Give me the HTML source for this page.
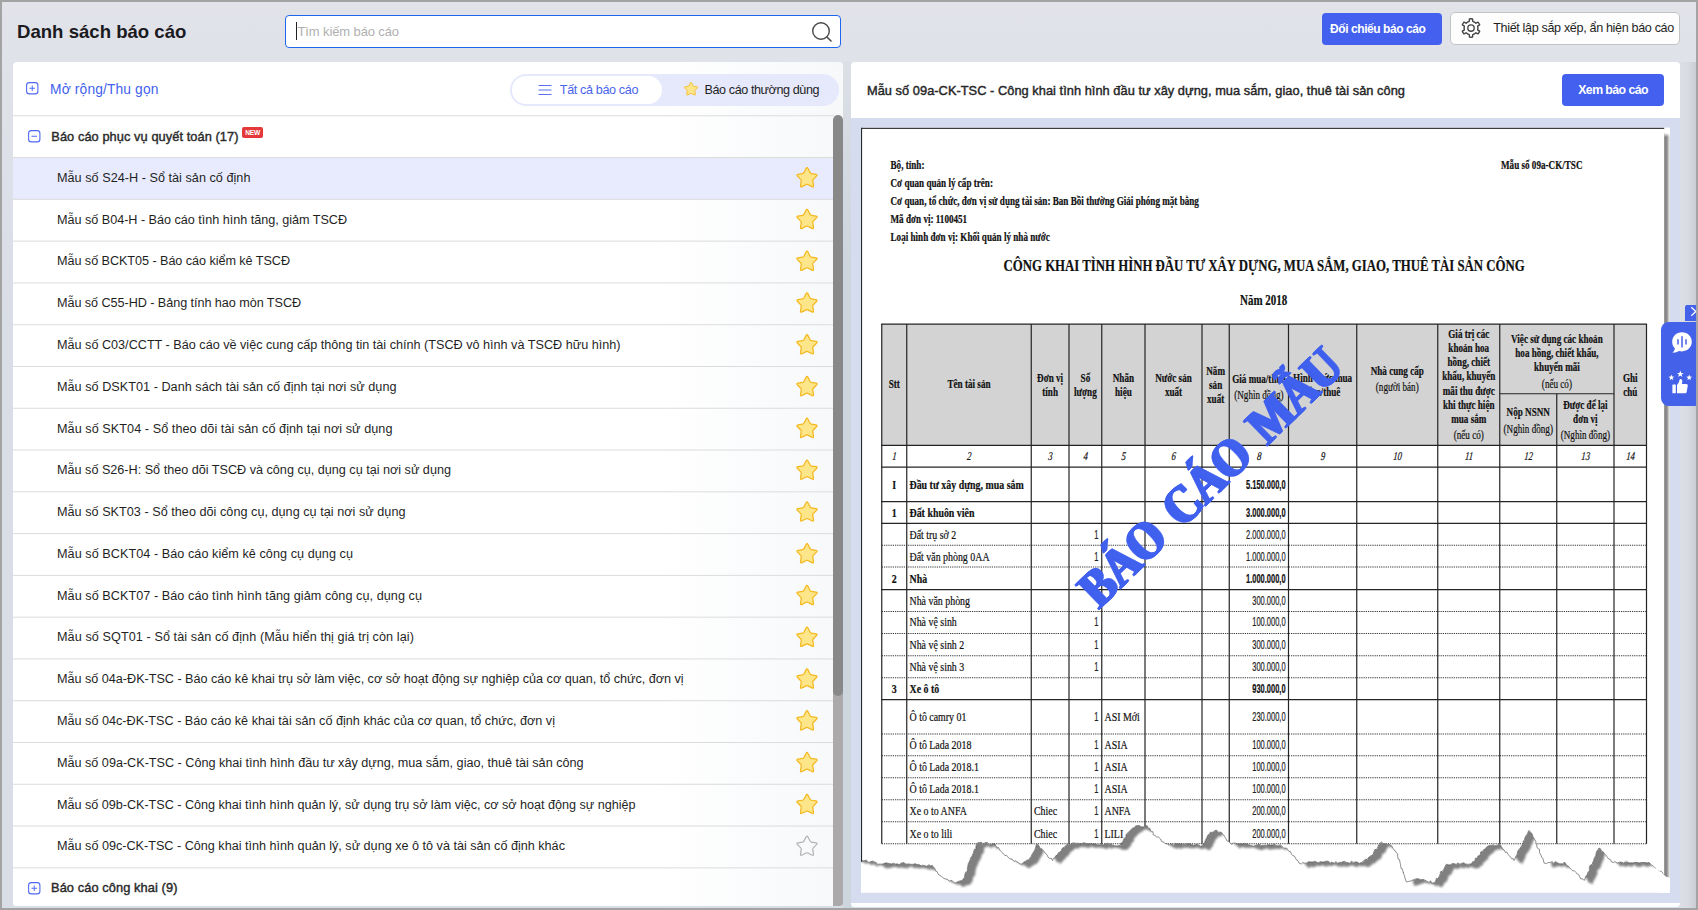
<!DOCTYPE html>
<html><head><meta charset="utf-8"><title>Danh sách báo cáo</title>
<style>
*{box-sizing:border-box;margin:0;padding:0}
html,body{width:1698px;height:910px;overflow:hidden}
body{background:#a3a3a3;font-family:"Liberation Sans",sans-serif;color:#1f1f1f;position:relative}
.abs{position:absolute}
#page{position:absolute;left:2px;top:2px;width:1694px;height:905.6px;background:linear-gradient(to bottom,#e1e3e9 0,#e0e2e9 60px,#d9dde6 320px,#d9dde6 100%);overflow:hidden}
.t{position:absolute;white-space:pre;line-height:0;font-size:0}
.t span{line-height:1;display:block}
#lp{position:absolute;left:11px;top:60px;width:830px;height:844.2px;background:linear-gradient(to right,#fff 0,#fff 78%,#f6f8fa 100%);border-radius:4px 4px 3px 3px;overflow:hidden}
#rp{position:absolute;left:849px;top:60px;width:829px;height:844.5px;background:#fff;border-radius:4px;overflow:hidden}
.row{position:absolute;left:0;width:820px}
.star{position:absolute;overflow:visible}
</style></head><body><div id="page">

<div class="t" style="left:15px;top:18.9px"><span style="font:bold 18.6px 'Liberation Sans', sans-serif;letter-spacing:-0.004px;white-space:pre;color:#1a1a1f">Danh sách báo cáo</span></div>
<div class="abs" style="left:283px;top:13px;width:556px;height:33px;background:#fff;border:1.4px solid #1d66ee;border-radius:4px"></div>
<div class="abs" style="left:294px;top:20px;width:1px;height:18px;background:#222"></div>
<div class="t" style="left:295.5px;top:21.9px"><span style="font:13px 'Liberation Sans', sans-serif;letter-spacing:-0.114px;white-space:pre;color:#b0b0b0">Tìm kiếm báo cáo</span></div>
<svg class="abs" style="left:807.5px;top:17.5px" width="24" height="24" viewBox="0 0 24 24"><circle cx="11" cy="11" r="8.3" fill="none" stroke="#484848" stroke-width="1.4"/><path d="M17.2 17.2 L21 21" stroke="#484848" stroke-width="1.6" stroke-linecap="round"/></svg>
<div class="abs" style="left:1320px;top:11px;width:120px;height:32px;background:#4361ee;border-radius:4px"></div>
<div class="t" style="left:1328px;top:19.9px"><span style="font:bold 12px 'Liberation Sans', sans-serif;letter-spacing:-0.423px;white-space:pre;color:#fff">Đối chiếu báo cáo</span></div>
<div class="abs" style="left:1448px;top:10.3px;width:230px;height:32.6px;background:#fdfdfd;border:1px solid #c2c3c7;border-radius:5px"></div>
<div class="t" style="left:1491.2px;top:18.73px"><span style="font:12.6px 'Liberation Sans', sans-serif;letter-spacing:-0.348px;white-space:pre;color:#1f1f1f">Thiết lập sắp xếp, ẩn hiện báo cáo</span></div>
<svg class="abs" style="left:1458px;top:15px" width="22" height="22" viewBox="-11 -11 22 22"><path d="M-1.72 -6.68 L-1.58 -9.06 A9.20 9.20 0 0 1 1.58 -9.06 L1.72 -6.68 A6.90 6.90 0 0 1 4.93 -4.83 L7.06 -5.90 A9.20 9.20 0 0 1 8.64 -3.16 L6.65 -1.86 A6.90 6.90 0 0 1 6.65 1.86 L8.64 3.16 A9.20 9.20 0 0 1 7.06 5.90 L4.93 4.83 A6.90 6.90 0 0 1 1.72 6.68 L1.58 9.06 A9.20 9.20 0 0 1 -1.58 9.06 L-1.72 6.68 A6.90 6.90 0 0 1 -4.93 4.83 L-7.06 5.90 A9.20 9.20 0 0 1 -8.64 3.16 L-6.65 1.86 A6.90 6.90 0 0 1 -6.65 -1.86 L-8.64 -3.16 A9.20 9.20 0 0 1 -7.06 -5.90 L-4.93 -4.83 A6.90 6.90 0 0 1 -1.72 -6.68 Z" fill="none" stroke="#444" stroke-width="1.4" stroke-linejoin="round"/><circle r="3.2" fill="none" stroke="#444" stroke-width="1.35"/></svg>
<div class="abs" style="left:840.6px;top:60px;width:8.6px;height:846px;background:linear-gradient(to bottom,#dcdfe6 0,#cdd5dd 200px,#cdd5dd 100%)"></div>
<div class="abs" style="left:1678px;top:60px;width:16px;height:846px;background:linear-gradient(to right,#dcdfe6 0,#d8dbe2 50%,#cacdd4 100%)"></div>
<div id="lp">
<svg class="abs" style="left:13px;top:20px" width="13" height="13" viewBox="0 0 13 13"><rect x="0.6" y="0.6" width="11.3" height="11.3" rx="2.7" fill="#fff" stroke="#5069f2" stroke-width="1.1"/><path d="M3.5 6.25 H9 M6.25 3.5 V9" stroke="#5069f2" stroke-width="1"/></svg>
<div class="t" style="left:37.1px;top:20.1px"><span style="font:13.8px 'Liberation Sans', sans-serif;letter-spacing:0.130px;white-space:pre;color:#4262ee">Mở rộng/Thu gọn</span></div>
<div class="abs" style="left:497px;top:12px;width:329px;height:32px;background:#e6e9fc;border-radius:16px"></div>
<div class="abs" style="left:499px;top:14px;width:150px;height:28px;background:#fff;border-radius:14px"></div>
<svg class="abs" style="left:525px;top:21.5px" width="14" height="12" viewBox="0 0 14 12"><path d="M0.5 1.5 H13.5 M0.5 6 H13.5 M0.5 10.5 H13.5" stroke="#5a70f0" stroke-width="1.1"/></svg>
<div class="t" style="left:546.8px;top:21px"><span style="font:12.6px 'Liberation Sans', sans-serif;letter-spacing:-0.358px;white-space:pre;color:#4a64ea">Tất cả báo cáo</span></div>
<svg class="star" style="left:669.5px;top:19.5px;width:16px;height:15px" viewBox="0 0 24 22" width="24" height="22"><path d="M11.04 1.07 Q12.00 -0.80 12.96 1.07 L15.06 5.18 Q15.47 5.98 16.36 6.12 L20.91 6.85 Q22.98 7.18 21.50 8.67 L18.25 11.94 Q17.61 12.57 17.75 13.46 L18.46 18.02 Q18.79 20.09 16.92 19.14 L12.80 17.06 Q12.00 16.65 11.20 17.06 L7.08 19.14 Q5.21 20.09 5.54 18.02 L6.25 13.46 Q6.39 12.57 5.75 11.94 L2.50 8.67 Q1.02 7.18 3.09 6.85 L7.64 6.12 Q8.53 5.98 8.94 5.18 Z" fill="#fde68a" stroke="#f5b81f" stroke-width="1.25" stroke-linejoin="round"/></svg>
<div class="t" style="left:691.5px;top:21px"><span style="font:12.6px 'Liberation Sans', sans-serif;letter-spacing:-0.413px;white-space:pre;color:#1f1f1f">Báo cáo thường dùng</span></div>
<div class="row" style="top:53.3px;height:41.78px"></div>
<svg class="abs" style="left:15px;top:68px" width="13" height="13" viewBox="0 0 13 13"><rect x="0.6" y="0.6" width="11.3" height="11.3" rx="2.7" fill="#fff" stroke="#5069f2" stroke-width="1.1"/><path d="M3.5 6.25 H9" stroke="#5069f2" stroke-width="1"/></svg>
<div class="t" style="left:38.3px;top:66.95px"><span style="font:12.8px 'Liberation Sans', sans-serif;-webkit-text-stroke:0.42px currentColor;letter-spacing:0.075px;white-space:pre;color:#2a2a2a">Báo cáo phục vụ quyết toán (17)</span></div>
<div class="abs" style="left:229.4px;top:65.2px;width:20.5px;height:10.6px;background:#e5383b;border-radius:2px;color:#fff;font:bold 6.6px 'Liberation Sans', sans-serif;line-height:11.8px;text-align:center;letter-spacing:-0.2px">NEW</div>
<div class="row" style="top:95.08px;height:41.78px;background:#e8ebfd;"></div>
<div class="t" style="left:44px;top:108.88px"><span style="font:12.65px 'Liberation Sans', sans-serif;letter-spacing:0.029px;white-space:pre;">Mẫu số S24-H - Sổ tài sản cố định</span></div>
<div class="row" style="top:136.86px;height:41.78px;"></div>
<div class="t" style="left:44px;top:150.66px"><span style="font:12.65px 'Liberation Sans', sans-serif;letter-spacing:-0.028px;white-space:pre;">Mẫu số B04-H - Báo cáo tình hình tăng, giảm TSCĐ</span></div>
<div class="row" style="top:178.64px;height:41.78px;"></div>
<div class="t" style="left:44px;top:192.44px"><span style="font:12.65px 'Liberation Sans', sans-serif;letter-spacing:-0.059px;white-space:pre;">Mẫu số BCKT05 - Báo cáo kiểm kê TSCĐ</span></div>
<div class="row" style="top:220.42px;height:41.78px;"></div>
<div class="t" style="left:44px;top:234.22px"><span style="font:12.65px 'Liberation Sans', sans-serif;letter-spacing:-0.062px;white-space:pre;">Mẫu số C55-HD - Bảng tính hao mòn TSCĐ</span></div>
<div class="row" style="top:262.2px;height:41.78px;"></div>
<div class="t" style="left:44px;top:276px"><span style="font:12.65px 'Liberation Sans', sans-serif;letter-spacing:-0.003px;white-space:pre;">Mẫu số C03/CCTT - Báo cáo về việc cung cấp thông tin tài chính (TSCĐ vô hình và TSCĐ hữu hình)</span></div>
<div class="row" style="top:303.98px;height:41.78px;"></div>
<div class="t" style="left:44px;top:317.78px"><span style="font:12.65px 'Liberation Sans', sans-serif;letter-spacing:0.029px;white-space:pre;">Mẫu số DSKT01 - Danh sách tài sản cố định tại nơi sử dụng</span></div>
<div class="row" style="top:345.76px;height:41.78px;"></div>
<div class="t" style="left:44px;top:359.56px"><span style="font:12.65px 'Liberation Sans', sans-serif;letter-spacing:0.056px;white-space:pre;">Mẫu số SKT04 - Sổ theo dõi tài sản cố định tại nơi sử dụng</span></div>
<div class="row" style="top:387.54px;height:41.78px;"></div>
<div class="t" style="left:44px;top:401.34px"><span style="font:12.65px 'Liberation Sans', sans-serif;letter-spacing:-0.009px;white-space:pre;">Mẫu số S26-H: Sổ theo dõi TSCĐ và công cụ, dụng cụ tại nơi sử dụng</span></div>
<div class="row" style="top:429.32px;height:41.78px;"></div>
<div class="t" style="left:44px;top:443.12px"><span style="font:12.65px 'Liberation Sans', sans-serif;letter-spacing:0.025px;white-space:pre;">Mẫu số SKT03 - Sổ theo dõi công cụ, dụng cụ tại nơi sử dụng</span></div>
<div class="row" style="top:471.1px;height:41.78px;"></div>
<div class="t" style="left:44px;top:484.9px"><span style="font:12.65px 'Liberation Sans', sans-serif;letter-spacing:0.049px;white-space:pre;">Mẫu số BCKT04 - Báo cáo kiểm kê công cụ dụng cụ</span></div>
<div class="row" style="top:512.88px;height:41.78px;"></div>
<div class="t" style="left:44px;top:526.68px"><span style="font:12.65px 'Liberation Sans', sans-serif;letter-spacing:0.052px;white-space:pre;">Mẫu số BCKT07 - Báo cáo tình hình tăng giảm công cụ, dụng cụ</span></div>
<div class="row" style="top:554.66px;height:41.78px;"></div>
<div class="t" style="left:44px;top:568.46px"><span style="font:12.65px 'Liberation Sans', sans-serif;letter-spacing:0.078px;white-space:pre;">Mẫu số SQT01 - Sổ tài sản cố định (Mẫu hiển thị giá trị còn lại)</span></div>
<div class="row" style="top:596.44px;height:41.78px;"></div>
<div class="t" style="left:44px;top:610.24px"><span style="font:12.65px 'Liberation Sans', sans-serif;letter-spacing:-0.022px;white-space:pre;">Mẫu số 04a-ĐK-TSC - Báo cáo kê khai trụ sở làm việc, cơ sở hoạt động sự nghiệp của cơ quan, tổ chức, đơn vị</span></div>
<div class="row" style="top:638.22px;height:41.78px;"></div>
<div class="t" style="left:44px;top:652.02px"><span style="font:12.65px 'Liberation Sans', sans-serif;letter-spacing:0.001px;white-space:pre;">Mẫu số 04c-ĐK-TSC - Báo cáo kê khai tài sản cố định khác của cơ quan, tổ chức, đơn vị</span></div>
<div class="row" style="top:680px;height:41.78px;"></div>
<div class="t" style="left:44px;top:693.8px"><span style="font:12.65px 'Liberation Sans', sans-serif;letter-spacing:-0.014px;white-space:pre;">Mẫu số 09a-CK-TSC - Công khai tình hình đầu tư xây dựng, mua sắm, giao, thuê tài sản công</span></div>
<div class="row" style="top:721.78px;height:41.78px;"></div>
<div class="t" style="left:44px;top:735.58px"><span style="font:12.65px 'Liberation Sans', sans-serif;letter-spacing:-0.030px;white-space:pre;">Mẫu số 09b-CK-TSC - Công khai tình hình quản lý, sử dụng trụ sở làm việc, cơ sở hoạt động sự nghiệp</span></div>
<div class="row" style="top:763.56px;height:41.78px;"></div>
<div class="t" style="left:44px;top:777.36px"><span style="font:12.65px 'Liberation Sans', sans-serif;letter-spacing:-0.009px;white-space:pre;">Mẫu số 09c-CK-TSC - Công khai tình hình quản lý, sử dụng xe ô tô và tài sản cố định khác</span></div>
<div class="row" style="top:805.34px;height:41.78px"></div>
<svg class="abs" style="left:15px;top:819.94px" width="13" height="13" viewBox="0 0 13 13"><rect x="0.6" y="0.6" width="11.3" height="11.3" rx="2.7" fill="#fff" stroke="#5069f2" stroke-width="1.1"/><path d="M3.5 6.25 H9 M6.25 3.5 V9" stroke="#5069f2" stroke-width="1"/></svg>
<div class="t" style="left:38px;top:818.29px"><span style="font:12.8px 'Liberation Sans', sans-serif;-webkit-text-stroke:0.42px currentColor;letter-spacing:0.095px;white-space:pre;color:#2a2a2a">Báo cáo công khai (9)</span></div>
<svg class="abs" style="left:0;top:0" width="830" height="845"><rect x="0" y="53.30" width="821" height="1" fill="#dcdcdc"/><rect x="0" y="95.08" width="821" height="1" fill="#dcdcdc"/><rect x="0" y="136.86" width="821" height="1" fill="#dcdcdc"/><rect x="0" y="178.64" width="821" height="1" fill="#dcdcdc"/><rect x="0" y="220.42" width="821" height="1" fill="#dcdcdc"/><rect x="0" y="262.20" width="821" height="1" fill="#dcdcdc"/><rect x="0" y="303.98" width="821" height="1" fill="#dcdcdc"/><rect x="0" y="345.76" width="821" height="1" fill="#dcdcdc"/><rect x="0" y="387.54" width="821" height="1" fill="#dcdcdc"/><rect x="0" y="429.32" width="821" height="1" fill="#dcdcdc"/><rect x="0" y="471.10" width="821" height="1" fill="#dcdcdc"/><rect x="0" y="512.88" width="821" height="1" fill="#dcdcdc"/><rect x="0" y="554.66" width="821" height="1" fill="#dcdcdc"/><rect x="0" y="596.44" width="821" height="1" fill="#dcdcdc"/><rect x="0" y="638.22" width="821" height="1" fill="#dcdcdc"/><rect x="0" y="680.00" width="821" height="1" fill="#dcdcdc"/><rect x="0" y="721.78" width="821" height="1" fill="#dcdcdc"/><rect x="0" y="763.56" width="821" height="1" fill="#dcdcdc"/><rect x="0" y="805.34" width="821" height="1" fill="#dcdcdc"/><path transform="translate(782.00,105.43)" d="M11.04 1.07 Q12.00 -0.80 12.96 1.07 L15.06 5.18 Q15.47 5.98 16.36 6.12 L20.91 6.85 Q22.98 7.18 21.50 8.67 L18.25 11.94 Q17.61 12.57 17.75 13.46 L18.46 18.02 Q18.79 20.09 16.92 19.14 L12.80 17.06 Q12.00 16.65 11.20 17.06 L7.08 19.14 Q5.21 20.09 5.54 18.02 L6.25 13.46 Q6.39 12.57 5.75 11.94 L2.50 8.67 Q1.02 7.18 3.09 6.85 L7.64 6.12 Q8.53 5.98 8.94 5.18 Z" fill="#fde68a" stroke="#f5b81f" stroke-width="1.25" stroke-linejoin="round"/><path transform="translate(782.00,147.21)" d="M11.04 1.07 Q12.00 -0.80 12.96 1.07 L15.06 5.18 Q15.47 5.98 16.36 6.12 L20.91 6.85 Q22.98 7.18 21.50 8.67 L18.25 11.94 Q17.61 12.57 17.75 13.46 L18.46 18.02 Q18.79 20.09 16.92 19.14 L12.80 17.06 Q12.00 16.65 11.20 17.06 L7.08 19.14 Q5.21 20.09 5.54 18.02 L6.25 13.46 Q6.39 12.57 5.75 11.94 L2.50 8.67 Q1.02 7.18 3.09 6.85 L7.64 6.12 Q8.53 5.98 8.94 5.18 Z" fill="#fde68a" stroke="#f5b81f" stroke-width="1.25" stroke-linejoin="round"/><path transform="translate(782.00,188.99)" d="M11.04 1.07 Q12.00 -0.80 12.96 1.07 L15.06 5.18 Q15.47 5.98 16.36 6.12 L20.91 6.85 Q22.98 7.18 21.50 8.67 L18.25 11.94 Q17.61 12.57 17.75 13.46 L18.46 18.02 Q18.79 20.09 16.92 19.14 L12.80 17.06 Q12.00 16.65 11.20 17.06 L7.08 19.14 Q5.21 20.09 5.54 18.02 L6.25 13.46 Q6.39 12.57 5.75 11.94 L2.50 8.67 Q1.02 7.18 3.09 6.85 L7.64 6.12 Q8.53 5.98 8.94 5.18 Z" fill="#fde68a" stroke="#f5b81f" stroke-width="1.25" stroke-linejoin="round"/><path transform="translate(782.00,230.77)" d="M11.04 1.07 Q12.00 -0.80 12.96 1.07 L15.06 5.18 Q15.47 5.98 16.36 6.12 L20.91 6.85 Q22.98 7.18 21.50 8.67 L18.25 11.94 Q17.61 12.57 17.75 13.46 L18.46 18.02 Q18.79 20.09 16.92 19.14 L12.80 17.06 Q12.00 16.65 11.20 17.06 L7.08 19.14 Q5.21 20.09 5.54 18.02 L6.25 13.46 Q6.39 12.57 5.75 11.94 L2.50 8.67 Q1.02 7.18 3.09 6.85 L7.64 6.12 Q8.53 5.98 8.94 5.18 Z" fill="#fde68a" stroke="#f5b81f" stroke-width="1.25" stroke-linejoin="round"/><path transform="translate(782.00,272.55)" d="M11.04 1.07 Q12.00 -0.80 12.96 1.07 L15.06 5.18 Q15.47 5.98 16.36 6.12 L20.91 6.85 Q22.98 7.18 21.50 8.67 L18.25 11.94 Q17.61 12.57 17.75 13.46 L18.46 18.02 Q18.79 20.09 16.92 19.14 L12.80 17.06 Q12.00 16.65 11.20 17.06 L7.08 19.14 Q5.21 20.09 5.54 18.02 L6.25 13.46 Q6.39 12.57 5.75 11.94 L2.50 8.67 Q1.02 7.18 3.09 6.85 L7.64 6.12 Q8.53 5.98 8.94 5.18 Z" fill="#fde68a" stroke="#f5b81f" stroke-width="1.25" stroke-linejoin="round"/><path transform="translate(782.00,314.33)" d="M11.04 1.07 Q12.00 -0.80 12.96 1.07 L15.06 5.18 Q15.47 5.98 16.36 6.12 L20.91 6.85 Q22.98 7.18 21.50 8.67 L18.25 11.94 Q17.61 12.57 17.75 13.46 L18.46 18.02 Q18.79 20.09 16.92 19.14 L12.80 17.06 Q12.00 16.65 11.20 17.06 L7.08 19.14 Q5.21 20.09 5.54 18.02 L6.25 13.46 Q6.39 12.57 5.75 11.94 L2.50 8.67 Q1.02 7.18 3.09 6.85 L7.64 6.12 Q8.53 5.98 8.94 5.18 Z" fill="#fde68a" stroke="#f5b81f" stroke-width="1.25" stroke-linejoin="round"/><path transform="translate(782.00,356.11)" d="M11.04 1.07 Q12.00 -0.80 12.96 1.07 L15.06 5.18 Q15.47 5.98 16.36 6.12 L20.91 6.85 Q22.98 7.18 21.50 8.67 L18.25 11.94 Q17.61 12.57 17.75 13.46 L18.46 18.02 Q18.79 20.09 16.92 19.14 L12.80 17.06 Q12.00 16.65 11.20 17.06 L7.08 19.14 Q5.21 20.09 5.54 18.02 L6.25 13.46 Q6.39 12.57 5.75 11.94 L2.50 8.67 Q1.02 7.18 3.09 6.85 L7.64 6.12 Q8.53 5.98 8.94 5.18 Z" fill="#fde68a" stroke="#f5b81f" stroke-width="1.25" stroke-linejoin="round"/><path transform="translate(782.00,397.89)" d="M11.04 1.07 Q12.00 -0.80 12.96 1.07 L15.06 5.18 Q15.47 5.98 16.36 6.12 L20.91 6.85 Q22.98 7.18 21.50 8.67 L18.25 11.94 Q17.61 12.57 17.75 13.46 L18.46 18.02 Q18.79 20.09 16.92 19.14 L12.80 17.06 Q12.00 16.65 11.20 17.06 L7.08 19.14 Q5.21 20.09 5.54 18.02 L6.25 13.46 Q6.39 12.57 5.75 11.94 L2.50 8.67 Q1.02 7.18 3.09 6.85 L7.64 6.12 Q8.53 5.98 8.94 5.18 Z" fill="#fde68a" stroke="#f5b81f" stroke-width="1.25" stroke-linejoin="round"/><path transform="translate(782.00,439.67)" d="M11.04 1.07 Q12.00 -0.80 12.96 1.07 L15.06 5.18 Q15.47 5.98 16.36 6.12 L20.91 6.85 Q22.98 7.18 21.50 8.67 L18.25 11.94 Q17.61 12.57 17.75 13.46 L18.46 18.02 Q18.79 20.09 16.92 19.14 L12.80 17.06 Q12.00 16.65 11.20 17.06 L7.08 19.14 Q5.21 20.09 5.54 18.02 L6.25 13.46 Q6.39 12.57 5.75 11.94 L2.50 8.67 Q1.02 7.18 3.09 6.85 L7.64 6.12 Q8.53 5.98 8.94 5.18 Z" fill="#fde68a" stroke="#f5b81f" stroke-width="1.25" stroke-linejoin="round"/><path transform="translate(782.00,481.45)" d="M11.04 1.07 Q12.00 -0.80 12.96 1.07 L15.06 5.18 Q15.47 5.98 16.36 6.12 L20.91 6.85 Q22.98 7.18 21.50 8.67 L18.25 11.94 Q17.61 12.57 17.75 13.46 L18.46 18.02 Q18.79 20.09 16.92 19.14 L12.80 17.06 Q12.00 16.65 11.20 17.06 L7.08 19.14 Q5.21 20.09 5.54 18.02 L6.25 13.46 Q6.39 12.57 5.75 11.94 L2.50 8.67 Q1.02 7.18 3.09 6.85 L7.64 6.12 Q8.53 5.98 8.94 5.18 Z" fill="#fde68a" stroke="#f5b81f" stroke-width="1.25" stroke-linejoin="round"/><path transform="translate(782.00,523.23)" d="M11.04 1.07 Q12.00 -0.80 12.96 1.07 L15.06 5.18 Q15.47 5.98 16.36 6.12 L20.91 6.85 Q22.98 7.18 21.50 8.67 L18.25 11.94 Q17.61 12.57 17.75 13.46 L18.46 18.02 Q18.79 20.09 16.92 19.14 L12.80 17.06 Q12.00 16.65 11.20 17.06 L7.08 19.14 Q5.21 20.09 5.54 18.02 L6.25 13.46 Q6.39 12.57 5.75 11.94 L2.50 8.67 Q1.02 7.18 3.09 6.85 L7.64 6.12 Q8.53 5.98 8.94 5.18 Z" fill="#fde68a" stroke="#f5b81f" stroke-width="1.25" stroke-linejoin="round"/><path transform="translate(782.00,565.01)" d="M11.04 1.07 Q12.00 -0.80 12.96 1.07 L15.06 5.18 Q15.47 5.98 16.36 6.12 L20.91 6.85 Q22.98 7.18 21.50 8.67 L18.25 11.94 Q17.61 12.57 17.75 13.46 L18.46 18.02 Q18.79 20.09 16.92 19.14 L12.80 17.06 Q12.00 16.65 11.20 17.06 L7.08 19.14 Q5.21 20.09 5.54 18.02 L6.25 13.46 Q6.39 12.57 5.75 11.94 L2.50 8.67 Q1.02 7.18 3.09 6.85 L7.64 6.12 Q8.53 5.98 8.94 5.18 Z" fill="#fde68a" stroke="#f5b81f" stroke-width="1.25" stroke-linejoin="round"/><path transform="translate(782.00,606.79)" d="M11.04 1.07 Q12.00 -0.80 12.96 1.07 L15.06 5.18 Q15.47 5.98 16.36 6.12 L20.91 6.85 Q22.98 7.18 21.50 8.67 L18.25 11.94 Q17.61 12.57 17.75 13.46 L18.46 18.02 Q18.79 20.09 16.92 19.14 L12.80 17.06 Q12.00 16.65 11.20 17.06 L7.08 19.14 Q5.21 20.09 5.54 18.02 L6.25 13.46 Q6.39 12.57 5.75 11.94 L2.50 8.67 Q1.02 7.18 3.09 6.85 L7.64 6.12 Q8.53 5.98 8.94 5.18 Z" fill="#fde68a" stroke="#f5b81f" stroke-width="1.25" stroke-linejoin="round"/><path transform="translate(782.00,648.57)" d="M11.04 1.07 Q12.00 -0.80 12.96 1.07 L15.06 5.18 Q15.47 5.98 16.36 6.12 L20.91 6.85 Q22.98 7.18 21.50 8.67 L18.25 11.94 Q17.61 12.57 17.75 13.46 L18.46 18.02 Q18.79 20.09 16.92 19.14 L12.80 17.06 Q12.00 16.65 11.20 17.06 L7.08 19.14 Q5.21 20.09 5.54 18.02 L6.25 13.46 Q6.39 12.57 5.75 11.94 L2.50 8.67 Q1.02 7.18 3.09 6.85 L7.64 6.12 Q8.53 5.98 8.94 5.18 Z" fill="#fde68a" stroke="#f5b81f" stroke-width="1.25" stroke-linejoin="round"/><path transform="translate(782.00,690.35)" d="M11.04 1.07 Q12.00 -0.80 12.96 1.07 L15.06 5.18 Q15.47 5.98 16.36 6.12 L20.91 6.85 Q22.98 7.18 21.50 8.67 L18.25 11.94 Q17.61 12.57 17.75 13.46 L18.46 18.02 Q18.79 20.09 16.92 19.14 L12.80 17.06 Q12.00 16.65 11.20 17.06 L7.08 19.14 Q5.21 20.09 5.54 18.02 L6.25 13.46 Q6.39 12.57 5.75 11.94 L2.50 8.67 Q1.02 7.18 3.09 6.85 L7.64 6.12 Q8.53 5.98 8.94 5.18 Z" fill="#fde68a" stroke="#f5b81f" stroke-width="1.25" stroke-linejoin="round"/><path transform="translate(782.00,732.13)" d="M11.04 1.07 Q12.00 -0.80 12.96 1.07 L15.06 5.18 Q15.47 5.98 16.36 6.12 L20.91 6.85 Q22.98 7.18 21.50 8.67 L18.25 11.94 Q17.61 12.57 17.75 13.46 L18.46 18.02 Q18.79 20.09 16.92 19.14 L12.80 17.06 Q12.00 16.65 11.20 17.06 L7.08 19.14 Q5.21 20.09 5.54 18.02 L6.25 13.46 Q6.39 12.57 5.75 11.94 L2.50 8.67 Q1.02 7.18 3.09 6.85 L7.64 6.12 Q8.53 5.98 8.94 5.18 Z" fill="#fde68a" stroke="#f5b81f" stroke-width="1.25" stroke-linejoin="round"/><path transform="translate(782.00,773.91)" d="M11.04 1.07 Q12.00 -0.80 12.96 1.07 L15.06 5.18 Q15.47 5.98 16.36 6.12 L20.91 6.85 Q22.98 7.18 21.50 8.67 L18.25 11.94 Q17.61 12.57 17.75 13.46 L18.46 18.02 Q18.79 20.09 16.92 19.14 L12.80 17.06 Q12.00 16.65 11.20 17.06 L7.08 19.14 Q5.21 20.09 5.54 18.02 L6.25 13.46 Q6.39 12.57 5.75 11.94 L2.50 8.67 Q1.02 7.18 3.09 6.85 L7.64 6.12 Q8.53 5.98 8.94 5.18 Z" fill="none" stroke="#b4b4b4" stroke-width="1.25" stroke-linejoin="round"/></svg>
<div class="abs" style="left:820.2px;top:626px;width:9.5px;height:219px;background:#aba9a9"></div>
<div class="abs" style="left:820.2px;top:53.4px;width:9.5px;height:580.6px;background:#888;border-radius:5px"></div>
</div>
<div id="rp">
<div class="t" style="left:16px;top:21.05px"><span style="font:12.8px 'Liberation Sans', sans-serif;-webkit-text-stroke:0.42px currentColor;letter-spacing:0.042px;white-space:pre;color:#262626">Mẫu số 09a-CK-TSC - Công khai tình hình đầu tư xây dựng, mua sắm, giao, thuê tài sản công</span></div>
<div class="abs" style="left:711px;top:12px;width:102px;height:32px;background:#4361ee;border-radius:4px"></div>
<div class="t" style="left:727.2px;top:21.1px"><span style="font:bold 12.3px 'Liberation Sans', sans-serif;letter-spacing:-0.551px;white-space:pre;color:#fff">Xem báo cáo</span></div>
<div id="pv" class="abs" style="left:0;top:56px;width:830px;height:784.6px;background:#d5dcf0">
<svg class="abs" style="left:0;top:0" width="830" height="785" viewBox="851 118 830 785">
<defs>
<linearGradient id="rsh" x1="0" x2="1" y1="0" y2="0"><stop offset="0" stop-color="#7d7d7d"/><stop offset="0.45" stop-color="#8c8c8c"/><stop offset="1" stop-color="#f4f4f4"/></linearGradient>
<linearGradient id="rsht" x1="0" x2="0" y1="0" y2="1"><stop offset="0" stop-color="#fff" stop-opacity="1"/><stop offset="1" stop-color="#fff" stop-opacity="0"/></linearGradient>
<filter id="tsh" x="-5%" y="-5%" width="110%" height="130%"><feGaussianBlur in="SourceAlpha" stdDeviation="0.9"/><feOffset dx="8.3" dy="4.2"/><feComponentTransfer><feFuncA type="linear" slope="0.5"/></feComponentTransfer><feMerge><feMergeNode/><feMergeNode in="SourceGraphic"/></feMerge></filter>
<clipPath id="tearclip"><polygon points="800,100 850.0,858.0 851.7,857.4 853.9,857.6 855.7,858.6 856.9,859.3 858.8,859.4 860.7,858.9 863.0,861.0 865.0,860.5 866.4,860.2 868.9,862.5 870.7,861.6 873.1,861.1 874.8,862.2 875.8,862.2 877.9,864.4 880.0,864.0 881.5,864.2 884.0,863.6 885.8,862.8 887.1,863.1 889.8,863.6 891.3,864.0 893.4,863.2 895.8,864.2 897.0,863.8 899.3,864.6 901.4,863.0 903.7,862.6 905.0,863.5 906.9,864.3 908.5,863.8 910.3,864.3 913.2,864.3 915.3,863.7 917.0,864.6 918.8,864.4 921.1,865.8 922.6,865.2 924.1,865.4 926.8,866.3 929.0,864.7 930.4,865.8 932.5,865.5 933.2,867.1 934.6,867.9 935.7,871.2 937.0,871.5 938.6,874.8 940.0,875.5 941.4,876.3 943.8,878.3 946.0,879.2 947.2,879.0 949.2,881.1 951.8,880.3 952.7,881.4 955.0,883.0 956.5,882.3 958.9,881.2 960.0,880.9 962.5,880.5 963.1,878.9 964.5,877.4 964.7,875.4 965.6,872.2 966.6,872.3 967.3,870.5 967.4,867.7 967.7,866.6 968.4,863.3 969.3,861.8 970.2,859.7 970.4,858.2 971.3,856.9 971.9,856.4 973.4,852.8 973.6,851.5 974.5,849.2 975.8,849.6 976.0,846.5 976.3,843.8 977.5,843.0 979.2,842.5 981.8,842.4 982.7,844.5 985.3,842.6 987.3,842.4 989.2,844.9 991.6,844.3 992.8,843.6 995.0,844.0 995.8,846.1 997.5,847.6 998.5,847.6 1000.4,851.0 1001.7,852.0 1002.9,853.2 1003.4,854.1 1005.0,855.5 1006.5,855.3 1007.7,856.8 1009.7,858.8 1012.2,859.1 1013.9,861.4 1015.6,860.8 1016.3,861.4 1018.0,862.3 1020.0,864.0 1021.8,864.0 1023.8,861.9 1025.2,861.7 1026.1,860.4 1028.8,859.7 1030.0,858.0 1031.3,856.2 1031.5,855.2 1032.6,853.5 1034.3,850.7 1034.6,850.4 1035.9,846.7 1036.1,844.9 1037.5,844.0 1039.3,846.3 1039.6,847.8 1041.9,848.9 1042.3,850.1 1043.3,850.3 1045.0,853.0 1047.1,854.9 1048.0,857.1 1049.4,858.4 1051.4,858.3 1052.5,860.5 1053.4,858.4 1054.7,857.6 1055.9,855.6 1057.0,855.3 1058.6,852.6 1060.1,852.1 1061.2,850.6 1062.5,848.0 1064.5,847.1 1066.5,844.8 1068.4,844.2 1069.9,844.7 1072.5,843.0 1074.0,843.0 1076.6,843.3 1078.0,843.2 1080.2,843.9 1081.6,843.4 1083.7,842.8 1086.2,843.4 1087.9,844.1 1090.2,843.4 1091.8,843.6 1093.5,844.1 1095.4,843.8 1097.3,844.9 1099.5,844.8 1101.7,843.3 1103.2,845.0 1105.0,844.0 1107.6,843.3 1108.8,844.3 1110.9,844.0 1113.0,845.3 1116.1,846.1 1117.4,845.8 1120.0,845.5 1121.3,842.8 1122.6,843.1 1122.9,841.3 1124.2,838.3 1126.0,837.4 1126.0,834.6 1127.5,833.0 1129.2,831.3 1130.5,830.0 1132.8,828.0 1134.2,827.9 1135.2,826.3 1137.5,825.5 1139.7,825.6 1141.0,826.9 1143.9,827.0 1145.0,825.3 1147.5,826.0 1148.2,828.3 1149.7,828.2 1151.2,831.8 1152.9,831.7 1153.3,835.0 1155.0,835.5 1156.9,837.2 1158.1,836.8 1160.6,839.0 1161.6,841.5 1164.1,842.3 1165.2,843.7 1167.5,844.0 1168.9,845.0 1171.3,843.8 1173.4,845.3 1175.0,843.4 1177.3,843.8 1178.7,843.7 1180.5,843.8 1182.8,844.2 1185.3,844.2 1186.9,844.0 1188.7,843.7 1190.5,843.8 1193.1,845.2 1194.3,845.1 1197.2,844.3 1199.0,845.2 1200.5,846.3 1202.5,845.5 1203.4,843.5 1204.7,842.7 1205.3,840.3 1206.8,837.8 1207.5,835.5 1209.3,833.9 1210.7,832.1 1212.6,832.4 1215.0,830.5 1216.7,830.2 1218.5,832.4 1221.0,832.0 1222.7,834.0 1223.3,834.5 1224.6,836.6 1225.7,838.2 1227.1,841.0 1229.3,841.5 1230.0,843.0 1231.6,844.4 1233.6,843.0 1235.1,843.3 1237.7,843.8 1239.2,844.0 1240.9,843.6 1242.9,844.1 1244.8,843.3 1247.1,844.1 1249.3,845.0 1251.5,845.5 1253.3,846.3 1255.0,845.5 1256.8,844.9 1259.4,844.3 1261.0,845.4 1262.0,845.7 1265.0,845.1 1266.7,845.4 1267.8,844.5 1270.2,845.1 1272.5,845.0 1274.0,844.0 1276.2,845.6 1278.4,845.8 1279.9,844.8 1281.9,846.3 1283.9,848.2 1286.5,848.0 1287.8,849.8 1289.2,851.5 1290.2,851.3 1291.9,854.6 1292.8,855.6 1294.2,855.9 1295.5,857.9 1296.0,859.4 1298.0,860.8 1299.0,863.0 1301.2,864.1 1302.8,862.6 1304.7,863.2 1307.0,863.0 1308.8,861.6 1310.1,861.9 1312.8,862.0 1314.5,861.2 1315.8,861.7 1318.4,862.7 1320.4,861.6 1322.1,862.0 1324.0,862.0 1325.9,861.1 1328.4,861.3 1330.5,863.2 1331.3,862.0 1334.3,863.3 1335.8,861.6 1337.5,863.3 1339.4,862.4 1341.3,862.3 1344.3,861.3 1346.1,862.3 1348.2,862.8 1349.3,863.3 1351.6,861.2 1353.0,862.4 1355.5,861.9 1357.1,862.1 1359.3,863.3 1361.5,862.5 1362.5,862.0 1365.3,859.2 1367.0,859.5 1368.7,857.3 1369.7,856.4 1371.5,855.5 1373.4,854.0 1373.8,851.9 1375.0,849.3 1376.0,849.6 1377.5,848.2 1378.7,844.8 1380.3,842.9 1381.5,842.0 1383.2,843.6 1385.7,843.8 1387.3,844.5 1389.0,844.0 1390.8,845.6 1391.8,845.9 1393.0,848.4 1394.3,850.4 1395.0,850.4 1396.5,853.0 1397.7,853.9 1397.7,856.2 1398.1,859.0 1399.6,859.7 1399.8,861.6 1400.3,863.6 1400.5,864.8 1401.1,868.5 1402.1,868.6 1403.3,872.4 1403.3,872.0 1403.6,873.7 1404.4,875.5 1404.9,877.8 1406.0,881.2 1406.5,882.0 1408.9,881.3 1410.6,881.1 1412.6,880.1 1414.3,879.4 1417.5,878.6 1419.0,879.0 1420.9,879.8 1423.2,879.3 1424.3,879.9 1426.4,880.9 1428.9,882.4 1430.7,880.8 1431.5,883.0 1434.0,883.0 1435.6,881.2 1436.4,878.3 1437.3,878.9 1439.0,877.0 1440.3,873.7 1440.3,871.8 1442.0,871.4 1443.6,869.7 1444.4,868.1 1445.3,865.9 1446.5,864.0 1447.8,864.7 1450.0,865.0 1452.5,863.5 1453.7,863.4 1456.3,864.5 1457.6,862.9 1460.0,864.2 1461.7,863.3 1463.9,862.8 1465.5,863.9 1468.2,864.4 1470.1,863.9 1471.5,864.0 1472.5,861.8 1474.8,861.4 1475.4,858.2 1477.0,858.3 1478.2,855.7 1479.9,855.8 1480.7,852.0 1482.2,851.4 1484.0,849.3 1485.5,849.1 1486.5,847.0 1488.6,845.8 1491.3,845.5 1493.2,844.8 1494.5,845.7 1496.7,845.6 1499.0,844.0 1500.4,844.7 1501.4,846.8 1503.3,849.6 1504.0,849.7 1505.5,852.7 1506.7,851.9 1508.0,854.2 1510.4,857.0 1511.6,858.7 1513.2,858.6 1514.0,860.5 1514.5,859.8 1516.1,855.8 1516.9,854.9 1517.4,853.0 1518.0,850.4 1519.0,849.5 1520.7,847.2 1521.6,845.7 1521.8,845.4 1523.2,842.7 1523.1,841.0 1524.4,840.4 1525.1,837.2 1526.8,834.6 1527.1,834.8 1528.5,831.1 1529.0,830.5 1529.7,831.3 1532.0,833.6 1533.1,837.1 1534.0,838.0 1534.5,839.2 1536.0,841.9 1535.8,843.9 1536.6,844.6 1537.0,847.6 1538.8,849.0 1539.6,849.3 1539.4,852.2 1541.0,855.2 1541.0,855.2 1541.8,857.6 1543.1,858.6 1543.7,861.8 1544.0,863.0 1546.4,863.6 1548.1,862.5 1549.8,862.5 1552.4,861.7 1553.6,863.4 1555.7,861.6 1557.4,862.8 1559.8,863.8 1562.5,863.8 1564.0,862.5 1565.1,862.7 1566.4,865.1 1568.5,866.2 1569.4,867.4 1571.3,869.4 1572.9,871.1 1574.2,870.6 1575.9,872.3 1576.9,873.8 1578.6,874.6 1579.4,876.0 1580.7,878.9 1582.7,878.8 1584.0,880.5 1584.7,879.9 1585.7,876.2 1586.9,875.5 1587.9,872.3 1588.1,872.3 1589.4,870.7 1589.3,867.3 1590.2,865.3 1592.1,864.5 1592.9,862.1 1593.6,860.5 1593.7,859.5 1595.4,856.0 1595.8,855.5 1596.1,853.1 1596.9,850.9 1597.9,850.1 1599.0,848.0 1600.6,848.8 1601.2,850.7 1603.4,851.9 1604.3,853.5 1606.3,855.9 1606.8,856.3 1608.6,859.0 1610.3,859.4 1611.5,862.0 1613.1,862.5 1615.3,861.5 1617.2,863.1 1619.2,862.2 1621.2,861.8 1623.8,863.2 1625.1,861.2 1627.6,861.3 1628.6,863.0 1631.1,862.8 1633.1,863.0 1635.1,861.2 1636.6,862.1 1639.3,863.0 1640.6,862.3 1642.9,862.0 1644.6,861.5 1647.1,863.1 1649.0,862.0 1650.0,863.2 1652.3,865.7 1653.0,864.8 1655.4,868.2 1656.3,867.1 1658.3,869.2 1659.7,871.1 1661.1,871.2 1662.5,872.6 1663.5,875.4 1665.5,875.0 1666.5,877.0 1668.1,877.0 1670.4,877.2 1671.9,877.1 1674.6,879.0 1675.7,878.4 1678.6,877.3 1680.6,877.8 1682.3,879.1 1684.3,878.8 1686.0,879.7 1687.9,880.1 1690.0,880.0 1720,100"/></clipPath>
<clipPath id="docclip"><rect x="861" y="127.8" width="809" height="765"/></clipPath>
</defs>
<rect x="861" y="127.8" width="809" height="765" fill="#fff"/>
<g clip-path="url(#docclip)">
<polygon points="800,100 850.0,858.0 851.7,857.4 853.9,857.6 855.7,858.6 856.9,859.3 858.8,859.4 860.7,858.9 863.0,861.0 865.0,860.5 866.4,860.2 868.9,862.5 870.7,861.6 873.1,861.1 874.8,862.2 875.8,862.2 877.9,864.4 880.0,864.0 881.5,864.2 884.0,863.6 885.8,862.8 887.1,863.1 889.8,863.6 891.3,864.0 893.4,863.2 895.8,864.2 897.0,863.8 899.3,864.6 901.4,863.0 903.7,862.6 905.0,863.5 906.9,864.3 908.5,863.8 910.3,864.3 913.2,864.3 915.3,863.7 917.0,864.6 918.8,864.4 921.1,865.8 922.6,865.2 924.1,865.4 926.8,866.3 929.0,864.7 930.4,865.8 932.5,865.5 933.2,867.1 934.6,867.9 935.7,871.2 937.0,871.5 938.6,874.8 940.0,875.5 941.4,876.3 943.8,878.3 946.0,879.2 947.2,879.0 949.2,881.1 951.8,880.3 952.7,881.4 955.0,883.0 956.5,882.3 958.9,881.2 960.0,880.9 962.5,880.5 963.1,878.9 964.5,877.4 964.7,875.4 965.6,872.2 966.6,872.3 967.3,870.5 967.4,867.7 967.7,866.6 968.4,863.3 969.3,861.8 970.2,859.7 970.4,858.2 971.3,856.9 971.9,856.4 973.4,852.8 973.6,851.5 974.5,849.2 975.8,849.6 976.0,846.5 976.3,843.8 977.5,843.0 979.2,842.5 981.8,842.4 982.7,844.5 985.3,842.6 987.3,842.4 989.2,844.9 991.6,844.3 992.8,843.6 995.0,844.0 995.8,846.1 997.5,847.6 998.5,847.6 1000.4,851.0 1001.7,852.0 1002.9,853.2 1003.4,854.1 1005.0,855.5 1006.5,855.3 1007.7,856.8 1009.7,858.8 1012.2,859.1 1013.9,861.4 1015.6,860.8 1016.3,861.4 1018.0,862.3 1020.0,864.0 1021.8,864.0 1023.8,861.9 1025.2,861.7 1026.1,860.4 1028.8,859.7 1030.0,858.0 1031.3,856.2 1031.5,855.2 1032.6,853.5 1034.3,850.7 1034.6,850.4 1035.9,846.7 1036.1,844.9 1037.5,844.0 1039.3,846.3 1039.6,847.8 1041.9,848.9 1042.3,850.1 1043.3,850.3 1045.0,853.0 1047.1,854.9 1048.0,857.1 1049.4,858.4 1051.4,858.3 1052.5,860.5 1053.4,858.4 1054.7,857.6 1055.9,855.6 1057.0,855.3 1058.6,852.6 1060.1,852.1 1061.2,850.6 1062.5,848.0 1064.5,847.1 1066.5,844.8 1068.4,844.2 1069.9,844.7 1072.5,843.0 1074.0,843.0 1076.6,843.3 1078.0,843.2 1080.2,843.9 1081.6,843.4 1083.7,842.8 1086.2,843.4 1087.9,844.1 1090.2,843.4 1091.8,843.6 1093.5,844.1 1095.4,843.8 1097.3,844.9 1099.5,844.8 1101.7,843.3 1103.2,845.0 1105.0,844.0 1107.6,843.3 1108.8,844.3 1110.9,844.0 1113.0,845.3 1116.1,846.1 1117.4,845.8 1120.0,845.5 1121.3,842.8 1122.6,843.1 1122.9,841.3 1124.2,838.3 1126.0,837.4 1126.0,834.6 1127.5,833.0 1129.2,831.3 1130.5,830.0 1132.8,828.0 1134.2,827.9 1135.2,826.3 1137.5,825.5 1139.7,825.6 1141.0,826.9 1143.9,827.0 1145.0,825.3 1147.5,826.0 1148.2,828.3 1149.7,828.2 1151.2,831.8 1152.9,831.7 1153.3,835.0 1155.0,835.5 1156.9,837.2 1158.1,836.8 1160.6,839.0 1161.6,841.5 1164.1,842.3 1165.2,843.7 1167.5,844.0 1168.9,845.0 1171.3,843.8 1173.4,845.3 1175.0,843.4 1177.3,843.8 1178.7,843.7 1180.5,843.8 1182.8,844.2 1185.3,844.2 1186.9,844.0 1188.7,843.7 1190.5,843.8 1193.1,845.2 1194.3,845.1 1197.2,844.3 1199.0,845.2 1200.5,846.3 1202.5,845.5 1203.4,843.5 1204.7,842.7 1205.3,840.3 1206.8,837.8 1207.5,835.5 1209.3,833.9 1210.7,832.1 1212.6,832.4 1215.0,830.5 1216.7,830.2 1218.5,832.4 1221.0,832.0 1222.7,834.0 1223.3,834.5 1224.6,836.6 1225.7,838.2 1227.1,841.0 1229.3,841.5 1230.0,843.0 1231.6,844.4 1233.6,843.0 1235.1,843.3 1237.7,843.8 1239.2,844.0 1240.9,843.6 1242.9,844.1 1244.8,843.3 1247.1,844.1 1249.3,845.0 1251.5,845.5 1253.3,846.3 1255.0,845.5 1256.8,844.9 1259.4,844.3 1261.0,845.4 1262.0,845.7 1265.0,845.1 1266.7,845.4 1267.8,844.5 1270.2,845.1 1272.5,845.0 1274.0,844.0 1276.2,845.6 1278.4,845.8 1279.9,844.8 1281.9,846.3 1283.9,848.2 1286.5,848.0 1287.8,849.8 1289.2,851.5 1290.2,851.3 1291.9,854.6 1292.8,855.6 1294.2,855.9 1295.5,857.9 1296.0,859.4 1298.0,860.8 1299.0,863.0 1301.2,864.1 1302.8,862.6 1304.7,863.2 1307.0,863.0 1308.8,861.6 1310.1,861.9 1312.8,862.0 1314.5,861.2 1315.8,861.7 1318.4,862.7 1320.4,861.6 1322.1,862.0 1324.0,862.0 1325.9,861.1 1328.4,861.3 1330.5,863.2 1331.3,862.0 1334.3,863.3 1335.8,861.6 1337.5,863.3 1339.4,862.4 1341.3,862.3 1344.3,861.3 1346.1,862.3 1348.2,862.8 1349.3,863.3 1351.6,861.2 1353.0,862.4 1355.5,861.9 1357.1,862.1 1359.3,863.3 1361.5,862.5 1362.5,862.0 1365.3,859.2 1367.0,859.5 1368.7,857.3 1369.7,856.4 1371.5,855.5 1373.4,854.0 1373.8,851.9 1375.0,849.3 1376.0,849.6 1377.5,848.2 1378.7,844.8 1380.3,842.9 1381.5,842.0 1383.2,843.6 1385.7,843.8 1387.3,844.5 1389.0,844.0 1390.8,845.6 1391.8,845.9 1393.0,848.4 1394.3,850.4 1395.0,850.4 1396.5,853.0 1397.7,853.9 1397.7,856.2 1398.1,859.0 1399.6,859.7 1399.8,861.6 1400.3,863.6 1400.5,864.8 1401.1,868.5 1402.1,868.6 1403.3,872.4 1403.3,872.0 1403.6,873.7 1404.4,875.5 1404.9,877.8 1406.0,881.2 1406.5,882.0 1408.9,881.3 1410.6,881.1 1412.6,880.1 1414.3,879.4 1417.5,878.6 1419.0,879.0 1420.9,879.8 1423.2,879.3 1424.3,879.9 1426.4,880.9 1428.9,882.4 1430.7,880.8 1431.5,883.0 1434.0,883.0 1435.6,881.2 1436.4,878.3 1437.3,878.9 1439.0,877.0 1440.3,873.7 1440.3,871.8 1442.0,871.4 1443.6,869.7 1444.4,868.1 1445.3,865.9 1446.5,864.0 1447.8,864.7 1450.0,865.0 1452.5,863.5 1453.7,863.4 1456.3,864.5 1457.6,862.9 1460.0,864.2 1461.7,863.3 1463.9,862.8 1465.5,863.9 1468.2,864.4 1470.1,863.9 1471.5,864.0 1472.5,861.8 1474.8,861.4 1475.4,858.2 1477.0,858.3 1478.2,855.7 1479.9,855.8 1480.7,852.0 1482.2,851.4 1484.0,849.3 1485.5,849.1 1486.5,847.0 1488.6,845.8 1491.3,845.5 1493.2,844.8 1494.5,845.7 1496.7,845.6 1499.0,844.0 1500.4,844.7 1501.4,846.8 1503.3,849.6 1504.0,849.7 1505.5,852.7 1506.7,851.9 1508.0,854.2 1510.4,857.0 1511.6,858.7 1513.2,858.6 1514.0,860.5 1514.5,859.8 1516.1,855.8 1516.9,854.9 1517.4,853.0 1518.0,850.4 1519.0,849.5 1520.7,847.2 1521.6,845.7 1521.8,845.4 1523.2,842.7 1523.1,841.0 1524.4,840.4 1525.1,837.2 1526.8,834.6 1527.1,834.8 1528.5,831.1 1529.0,830.5 1529.7,831.3 1532.0,833.6 1533.1,837.1 1534.0,838.0 1534.5,839.2 1536.0,841.9 1535.8,843.9 1536.6,844.6 1537.0,847.6 1538.8,849.0 1539.6,849.3 1539.4,852.2 1541.0,855.2 1541.0,855.2 1541.8,857.6 1543.1,858.6 1543.7,861.8 1544.0,863.0 1546.4,863.6 1548.1,862.5 1549.8,862.5 1552.4,861.7 1553.6,863.4 1555.7,861.6 1557.4,862.8 1559.8,863.8 1562.5,863.8 1564.0,862.5 1565.1,862.7 1566.4,865.1 1568.5,866.2 1569.4,867.4 1571.3,869.4 1572.9,871.1 1574.2,870.6 1575.9,872.3 1576.9,873.8 1578.6,874.6 1579.4,876.0 1580.7,878.9 1582.7,878.8 1584.0,880.5 1584.7,879.9 1585.7,876.2 1586.9,875.5 1587.9,872.3 1588.1,872.3 1589.4,870.7 1589.3,867.3 1590.2,865.3 1592.1,864.5 1592.9,862.1 1593.6,860.5 1593.7,859.5 1595.4,856.0 1595.8,855.5 1596.1,853.1 1596.9,850.9 1597.9,850.1 1599.0,848.0 1600.6,848.8 1601.2,850.7 1603.4,851.9 1604.3,853.5 1606.3,855.9 1606.8,856.3 1608.6,859.0 1610.3,859.4 1611.5,862.0 1613.1,862.5 1615.3,861.5 1617.2,863.1 1619.2,862.2 1621.2,861.8 1623.8,863.2 1625.1,861.2 1627.6,861.3 1628.6,863.0 1631.1,862.8 1633.1,863.0 1635.1,861.2 1636.6,862.1 1639.3,863.0 1640.6,862.3 1642.9,862.0 1644.6,861.5 1647.1,863.1 1649.0,862.0 1650.0,863.2 1652.3,865.7 1653.0,864.8 1655.4,868.2 1656.3,867.1 1658.3,869.2 1659.7,871.1 1661.1,871.2 1662.5,872.6 1663.5,875.4 1665.5,875.0 1666.5,877.0 1668.1,877.0 1670.4,877.2 1671.9,877.1 1674.6,879.0 1675.7,878.4 1678.6,877.3 1680.6,877.8 1682.3,879.1 1684.3,878.8 1686.0,879.7 1687.9,880.1 1690.0,880.0 1720,100" fill="#fff" filter="url(#tsh)"/>
<polyline points="850.0,858.0 851.7,857.4 853.9,857.6 855.7,858.6 856.9,859.3 858.8,859.4 860.7,858.9 863.0,861.0 865.0,860.5 866.4,860.2 868.9,862.5 870.7,861.6 873.1,861.1 874.8,862.2 875.8,862.2 877.9,864.4 880.0,864.0 881.5,864.2 884.0,863.6 885.8,862.8 887.1,863.1 889.8,863.6 891.3,864.0 893.4,863.2 895.8,864.2 897.0,863.8 899.3,864.6 901.4,863.0 903.7,862.6 905.0,863.5 906.9,864.3 908.5,863.8 910.3,864.3 913.2,864.3 915.3,863.7 917.0,864.6 918.8,864.4 921.1,865.8 922.6,865.2 924.1,865.4 926.8,866.3 929.0,864.7 930.4,865.8 932.5,865.5 933.2,867.1 934.6,867.9 935.7,871.2 937.0,871.5 938.6,874.8 940.0,875.5 941.4,876.3 943.8,878.3 946.0,879.2 947.2,879.0 949.2,881.1 951.8,880.3 952.7,881.4 955.0,883.0 956.5,882.3 958.9,881.2 960.0,880.9 962.5,880.5 963.1,878.9 964.5,877.4 964.7,875.4 965.6,872.2 966.6,872.3 967.3,870.5 967.4,867.7 967.7,866.6 968.4,863.3 969.3,861.8 970.2,859.7 970.4,858.2 971.3,856.9 971.9,856.4 973.4,852.8 973.6,851.5 974.5,849.2 975.8,849.6 976.0,846.5 976.3,843.8 977.5,843.0 979.2,842.5 981.8,842.4 982.7,844.5 985.3,842.6 987.3,842.4 989.2,844.9 991.6,844.3 992.8,843.6 995.0,844.0 995.8,846.1 997.5,847.6 998.5,847.6 1000.4,851.0 1001.7,852.0 1002.9,853.2 1003.4,854.1 1005.0,855.5 1006.5,855.3 1007.7,856.8 1009.7,858.8 1012.2,859.1 1013.9,861.4 1015.6,860.8 1016.3,861.4 1018.0,862.3 1020.0,864.0 1021.8,864.0 1023.8,861.9 1025.2,861.7 1026.1,860.4 1028.8,859.7 1030.0,858.0 1031.3,856.2 1031.5,855.2 1032.6,853.5 1034.3,850.7 1034.6,850.4 1035.9,846.7 1036.1,844.9 1037.5,844.0 1039.3,846.3 1039.6,847.8 1041.9,848.9 1042.3,850.1 1043.3,850.3 1045.0,853.0 1047.1,854.9 1048.0,857.1 1049.4,858.4 1051.4,858.3 1052.5,860.5 1053.4,858.4 1054.7,857.6 1055.9,855.6 1057.0,855.3 1058.6,852.6 1060.1,852.1 1061.2,850.6 1062.5,848.0 1064.5,847.1 1066.5,844.8 1068.4,844.2 1069.9,844.7 1072.5,843.0 1074.0,843.0 1076.6,843.3 1078.0,843.2 1080.2,843.9 1081.6,843.4 1083.7,842.8 1086.2,843.4 1087.9,844.1 1090.2,843.4 1091.8,843.6 1093.5,844.1 1095.4,843.8 1097.3,844.9 1099.5,844.8 1101.7,843.3 1103.2,845.0 1105.0,844.0 1107.6,843.3 1108.8,844.3 1110.9,844.0 1113.0,845.3 1116.1,846.1 1117.4,845.8 1120.0,845.5 1121.3,842.8 1122.6,843.1 1122.9,841.3 1124.2,838.3 1126.0,837.4 1126.0,834.6 1127.5,833.0 1129.2,831.3 1130.5,830.0 1132.8,828.0 1134.2,827.9 1135.2,826.3 1137.5,825.5 1139.7,825.6 1141.0,826.9 1143.9,827.0 1145.0,825.3 1147.5,826.0 1148.2,828.3 1149.7,828.2 1151.2,831.8 1152.9,831.7 1153.3,835.0 1155.0,835.5 1156.9,837.2 1158.1,836.8 1160.6,839.0 1161.6,841.5 1164.1,842.3 1165.2,843.7 1167.5,844.0 1168.9,845.0 1171.3,843.8 1173.4,845.3 1175.0,843.4 1177.3,843.8 1178.7,843.7 1180.5,843.8 1182.8,844.2 1185.3,844.2 1186.9,844.0 1188.7,843.7 1190.5,843.8 1193.1,845.2 1194.3,845.1 1197.2,844.3 1199.0,845.2 1200.5,846.3 1202.5,845.5 1203.4,843.5 1204.7,842.7 1205.3,840.3 1206.8,837.8 1207.5,835.5 1209.3,833.9 1210.7,832.1 1212.6,832.4 1215.0,830.5 1216.7,830.2 1218.5,832.4 1221.0,832.0 1222.7,834.0 1223.3,834.5 1224.6,836.6 1225.7,838.2 1227.1,841.0 1229.3,841.5 1230.0,843.0 1231.6,844.4 1233.6,843.0 1235.1,843.3 1237.7,843.8 1239.2,844.0 1240.9,843.6 1242.9,844.1 1244.8,843.3 1247.1,844.1 1249.3,845.0 1251.5,845.5 1253.3,846.3 1255.0,845.5 1256.8,844.9 1259.4,844.3 1261.0,845.4 1262.0,845.7 1265.0,845.1 1266.7,845.4 1267.8,844.5 1270.2,845.1 1272.5,845.0 1274.0,844.0 1276.2,845.6 1278.4,845.8 1279.9,844.8 1281.9,846.3 1283.9,848.2 1286.5,848.0 1287.8,849.8 1289.2,851.5 1290.2,851.3 1291.9,854.6 1292.8,855.6 1294.2,855.9 1295.5,857.9 1296.0,859.4 1298.0,860.8 1299.0,863.0 1301.2,864.1 1302.8,862.6 1304.7,863.2 1307.0,863.0 1308.8,861.6 1310.1,861.9 1312.8,862.0 1314.5,861.2 1315.8,861.7 1318.4,862.7 1320.4,861.6 1322.1,862.0 1324.0,862.0 1325.9,861.1 1328.4,861.3 1330.5,863.2 1331.3,862.0 1334.3,863.3 1335.8,861.6 1337.5,863.3 1339.4,862.4 1341.3,862.3 1344.3,861.3 1346.1,862.3 1348.2,862.8 1349.3,863.3 1351.6,861.2 1353.0,862.4 1355.5,861.9 1357.1,862.1 1359.3,863.3 1361.5,862.5 1362.5,862.0 1365.3,859.2 1367.0,859.5 1368.7,857.3 1369.7,856.4 1371.5,855.5 1373.4,854.0 1373.8,851.9 1375.0,849.3 1376.0,849.6 1377.5,848.2 1378.7,844.8 1380.3,842.9 1381.5,842.0 1383.2,843.6 1385.7,843.8 1387.3,844.5 1389.0,844.0 1390.8,845.6 1391.8,845.9 1393.0,848.4 1394.3,850.4 1395.0,850.4 1396.5,853.0 1397.7,853.9 1397.7,856.2 1398.1,859.0 1399.6,859.7 1399.8,861.6 1400.3,863.6 1400.5,864.8 1401.1,868.5 1402.1,868.6 1403.3,872.4 1403.3,872.0 1403.6,873.7 1404.4,875.5 1404.9,877.8 1406.0,881.2 1406.5,882.0 1408.9,881.3 1410.6,881.1 1412.6,880.1 1414.3,879.4 1417.5,878.6 1419.0,879.0 1420.9,879.8 1423.2,879.3 1424.3,879.9 1426.4,880.9 1428.9,882.4 1430.7,880.8 1431.5,883.0 1434.0,883.0 1435.6,881.2 1436.4,878.3 1437.3,878.9 1439.0,877.0 1440.3,873.7 1440.3,871.8 1442.0,871.4 1443.6,869.7 1444.4,868.1 1445.3,865.9 1446.5,864.0 1447.8,864.7 1450.0,865.0 1452.5,863.5 1453.7,863.4 1456.3,864.5 1457.6,862.9 1460.0,864.2 1461.7,863.3 1463.9,862.8 1465.5,863.9 1468.2,864.4 1470.1,863.9 1471.5,864.0 1472.5,861.8 1474.8,861.4 1475.4,858.2 1477.0,858.3 1478.2,855.7 1479.9,855.8 1480.7,852.0 1482.2,851.4 1484.0,849.3 1485.5,849.1 1486.5,847.0 1488.6,845.8 1491.3,845.5 1493.2,844.8 1494.5,845.7 1496.7,845.6 1499.0,844.0 1500.4,844.7 1501.4,846.8 1503.3,849.6 1504.0,849.7 1505.5,852.7 1506.7,851.9 1508.0,854.2 1510.4,857.0 1511.6,858.7 1513.2,858.6 1514.0,860.5 1514.5,859.8 1516.1,855.8 1516.9,854.9 1517.4,853.0 1518.0,850.4 1519.0,849.5 1520.7,847.2 1521.6,845.7 1521.8,845.4 1523.2,842.7 1523.1,841.0 1524.4,840.4 1525.1,837.2 1526.8,834.6 1527.1,834.8 1528.5,831.1 1529.0,830.5 1529.7,831.3 1532.0,833.6 1533.1,837.1 1534.0,838.0 1534.5,839.2 1536.0,841.9 1535.8,843.9 1536.6,844.6 1537.0,847.6 1538.8,849.0 1539.6,849.3 1539.4,852.2 1541.0,855.2 1541.0,855.2 1541.8,857.6 1543.1,858.6 1543.7,861.8 1544.0,863.0 1546.4,863.6 1548.1,862.5 1549.8,862.5 1552.4,861.7 1553.6,863.4 1555.7,861.6 1557.4,862.8 1559.8,863.8 1562.5,863.8 1564.0,862.5 1565.1,862.7 1566.4,865.1 1568.5,866.2 1569.4,867.4 1571.3,869.4 1572.9,871.1 1574.2,870.6 1575.9,872.3 1576.9,873.8 1578.6,874.6 1579.4,876.0 1580.7,878.9 1582.7,878.8 1584.0,880.5 1584.7,879.9 1585.7,876.2 1586.9,875.5 1587.9,872.3 1588.1,872.3 1589.4,870.7 1589.3,867.3 1590.2,865.3 1592.1,864.5 1592.9,862.1 1593.6,860.5 1593.7,859.5 1595.4,856.0 1595.8,855.5 1596.1,853.1 1596.9,850.9 1597.9,850.1 1599.0,848.0 1600.6,848.8 1601.2,850.7 1603.4,851.9 1604.3,853.5 1606.3,855.9 1606.8,856.3 1608.6,859.0 1610.3,859.4 1611.5,862.0 1613.1,862.5 1615.3,861.5 1617.2,863.1 1619.2,862.2 1621.2,861.8 1623.8,863.2 1625.1,861.2 1627.6,861.3 1628.6,863.0 1631.1,862.8 1633.1,863.0 1635.1,861.2 1636.6,862.1 1639.3,863.0 1640.6,862.3 1642.9,862.0 1644.6,861.5 1647.1,863.1 1649.0,862.0 1650.0,863.2 1652.3,865.7 1653.0,864.8 1655.4,868.2 1656.3,867.1 1658.3,869.2 1659.7,871.1 1661.1,871.2 1662.5,872.6 1663.5,875.4 1665.5,875.0 1666.5,877.0 1668.1,877.0 1670.4,877.2 1671.9,877.1 1674.6,879.0 1675.7,878.4 1678.6,877.3 1680.6,877.8 1682.3,879.1 1684.3,878.8 1686.0,879.7 1687.9,880.1 1690.0,880.0" fill="none" stroke="#444" stroke-width="0.6"/>
</g>
<rect x="1664.2" y="133" width="5.8" height="746" fill="url(#rsh)"/>
<rect x="1664.2" y="133" width="5.8" height="4" fill="url(#rsht)"/>
<g clip-path="url(#docclip)"><polygon points="1660,860 1611.5,862.0 1649.0,862.0 1666.5,877.0 1690.0,880.0 1690,900 1660,900" fill="#fff"/></g>
<rect x="861" y="127.8" width="803.2" height="1.1" fill="#2a2a2a"/>
<rect x="861" y="127.8" width="1.1" height="734" fill="#2a2a2a"/>
<g clip-path="url(#tearclip)">
<text transform="translate(890.50,168.70) scale(0.7350,1)" font-family="'Liberation Serif',serif" font-size="12.40" text-anchor="start" fill="#111" stroke="#111" stroke-width="0.22" style="font-weight:bold">Bộ, tỉnh:</text>
<text transform="translate(890.50,186.83) scale(0.7350,1)" font-family="'Liberation Serif',serif" font-size="12.40" text-anchor="start" fill="#111" stroke="#111" stroke-width="0.22" style="font-weight:bold">Cơ quan quản lý cấp trên:</text>
<text transform="translate(890.50,204.96) scale(0.7350,1)" font-family="'Liberation Serif',serif" font-size="12.40" text-anchor="start" fill="#111" stroke="#111" stroke-width="0.22" style="font-weight:bold">Cơ quan, tổ chức, đơn vị sử dụng tài sản: Ban Bồi thường Giải phóng mặt bằng</text>
<text transform="translate(890.50,223.09) scale(0.7350,1)" font-family="'Liberation Serif',serif" font-size="12.40" text-anchor="start" fill="#111" stroke="#111" stroke-width="0.22" style="font-weight:bold">Mã đơn vị: 1100451</text>
<text transform="translate(890.50,241.22) scale(0.7350,1)" font-family="'Liberation Serif',serif" font-size="12.40" text-anchor="start" fill="#111" stroke="#111" stroke-width="0.22" style="font-weight:bold">Loại hình đơn vị: Khối quản lý nhà nước</text>
<text transform="translate(1501.00,168.70) scale(0.7350,1)" font-family="'Liberation Serif',serif" font-size="12.40" text-anchor="start" fill="#111" stroke="#111" stroke-width="0.22" style="font-weight:bold">Mẫu số 09a-CK/TSC</text>
<text transform="translate(1264.10,271.00) scale(0.7350,1)" font-family="'Liberation Serif',serif" font-size="17.45" text-anchor="middle" fill="#111" stroke="#111" stroke-width="0.22" style="font-weight:bold">CÔNG KHAI TÌNH HÌNH ĐẦU TƯ XÂY DỰNG, MUA SẮM, GIAO, THUÊ TÀI SẢN CÔNG</text>
<text transform="translate(1263.60,305.00) scale(0.7350,1)" font-family="'Liberation Serif',serif" font-size="14.90" text-anchor="middle" fill="#111" stroke="#111" stroke-width="0.22" style="font-weight:bold">Năm 2018</text>
<rect x="881.75" y="324" width="764.75" height="121.25" fill="#d3d3d3"/>
<line x1="881.25" x2="1647.00" y1="324.00" y2="324.00" stroke="#242424" stroke-width="1.25"/>
<line x1="881.25" x2="1647.00" y1="445.25" y2="445.25" stroke="#242424" stroke-width="1.25"/>
<line x1="881.25" x2="1647.00" y1="467.00" y2="467.00" stroke="#242424" stroke-width="1.25"/>
<line x1="881.25" x2="1647.00" y1="501.50" y2="501.50" stroke="#242424" stroke-width="1.25"/>
<line x1="881.25" x2="1647.00" y1="523.40" y2="523.40" stroke="#242424" stroke-width="1.25"/>
<line x1="881.25" x2="1647.00" y1="589.50" y2="589.50" stroke="#242424" stroke-width="1.25"/>
<line x1="881.25" x2="1647.00" y1="699.60" y2="699.60" stroke="#242424" stroke-width="1.25"/>
<line x1="881.75" x2="1646.50" y1="545.25" y2="545.25" stroke="#3a3a3a" stroke-width="1.05" stroke-dasharray="1.25 0.95"/>
<line x1="881.75" x2="1646.50" y1="567.00" y2="567.00" stroke="#3a3a3a" stroke-width="1.05" stroke-dasharray="1.25 0.95"/>
<line x1="881.75" x2="1646.50" y1="611.50" y2="611.50" stroke="#3a3a3a" stroke-width="1.05" stroke-dasharray="1.25 0.95"/>
<line x1="881.75" x2="1646.50" y1="633.50" y2="633.50" stroke="#3a3a3a" stroke-width="1.05" stroke-dasharray="1.25 0.95"/>
<line x1="881.75" x2="1646.50" y1="655.75" y2="655.75" stroke="#3a3a3a" stroke-width="1.05" stroke-dasharray="1.25 0.95"/>
<line x1="881.75" x2="1646.50" y1="677.75" y2="677.75" stroke="#3a3a3a" stroke-width="1.05" stroke-dasharray="1.25 0.95"/>
<line x1="881.75" x2="1646.50" y1="733.90" y2="733.90" stroke="#3a3a3a" stroke-width="1.05" stroke-dasharray="1.25 0.95"/>
<line x1="881.75" x2="1646.50" y1="755.75" y2="755.75" stroke="#3a3a3a" stroke-width="1.05" stroke-dasharray="1.25 0.95"/>
<line x1="881.75" x2="1646.50" y1="777.75" y2="777.75" stroke="#3a3a3a" stroke-width="1.05" stroke-dasharray="1.25 0.95"/>
<line x1="881.75" x2="1646.50" y1="799.75" y2="799.75" stroke="#3a3a3a" stroke-width="1.05" stroke-dasharray="1.25 0.95"/>
<line x1="881.75" x2="1646.50" y1="821.75" y2="821.75" stroke="#3a3a3a" stroke-width="1.05" stroke-dasharray="1.25 0.95"/>
<line x1="881.75" x2="1646.50" y1="843.75" y2="843.75" stroke="#3a3a3a" stroke-width="1.05" stroke-dasharray="1.25 0.95"/>
<line x1="1499.75" x2="1614.00" y1="393.75" y2="393.75" stroke="#242424" stroke-width="1.1"/>
<line x1="881.75" x2="881.75" y1="324" y2="843.75" stroke="#242424" stroke-width="1.2"/>
<line x1="906.75" x2="906.75" y1="324" y2="843.75" stroke="#242424" stroke-width="1.2"/>
<line x1="1031.25" x2="1031.25" y1="324" y2="843.75" stroke="#242424" stroke-width="1.2"/>
<line x1="1069.00" x2="1069.00" y1="324" y2="843.75" stroke="#242424" stroke-width="1.2"/>
<line x1="1101.75" x2="1101.75" y1="324" y2="843.75" stroke="#242424" stroke-width="1.2"/>
<line x1="1145.00" x2="1145.00" y1="324" y2="843.75" stroke="#242424" stroke-width="1.2"/>
<line x1="1202.00" x2="1202.00" y1="324" y2="843.75" stroke="#242424" stroke-width="1.2"/>
<line x1="1229.25" x2="1229.25" y1="324" y2="843.75" stroke="#242424" stroke-width="1.2"/>
<line x1="1288.50" x2="1288.50" y1="324" y2="843.75" stroke="#242424" stroke-width="1.2"/>
<line x1="1356.75" x2="1356.75" y1="324" y2="843.75" stroke="#242424" stroke-width="1.2"/>
<line x1="1437.75" x2="1437.75" y1="324" y2="843.75" stroke="#242424" stroke-width="1.2"/>
<line x1="1499.75" x2="1499.75" y1="324" y2="843.75" stroke="#242424" stroke-width="1.2"/>
<line x1="1556.75" x2="1556.75" y1="393.75" y2="843.75" stroke="#242424" stroke-width="1.2"/>
<line x1="1614.00" x2="1614.00" y1="324" y2="843.75" stroke="#242424" stroke-width="1.2"/>
<line x1="1646.50" x2="1646.50" y1="324" y2="843.75" stroke="#242424" stroke-width="1.2"/>
<text transform="translate(894.25,388.40) scale(0.7350,1)" font-family="'Liberation Serif',serif" font-size="12.40" text-anchor="middle" fill="#111" stroke="#111" stroke-width="0.22" style="font-weight:bold">Stt</text>
<text transform="translate(969.00,388.40) scale(0.7350,1)" font-family="'Liberation Serif',serif" font-size="12.40" text-anchor="middle" fill="#111" stroke="#111" stroke-width="0.22" style="font-weight:bold">Tên tài sản</text>
<text transform="translate(1050.12,382.00) scale(0.7350,1)" font-family="'Liberation Serif',serif" font-size="12.40" text-anchor="middle" fill="#111" stroke="#111" stroke-width="0.22" style="font-weight:bold">Đơn vị</text>
<text transform="translate(1050.12,396.30) scale(0.7350,1)" font-family="'Liberation Serif',serif" font-size="12.40" text-anchor="middle" fill="#111" stroke="#111" stroke-width="0.22" style="font-weight:bold">tính</text>
<text transform="translate(1085.38,382.00) scale(0.7350,1)" font-family="'Liberation Serif',serif" font-size="12.40" text-anchor="middle" fill="#111" stroke="#111" stroke-width="0.22" style="font-weight:bold">Số</text>
<text transform="translate(1085.38,396.30) scale(0.7350,1)" font-family="'Liberation Serif',serif" font-size="12.40" text-anchor="middle" fill="#111" stroke="#111" stroke-width="0.22" style="font-weight:bold">lượng</text>
<text transform="translate(1123.38,382.00) scale(0.7350,1)" font-family="'Liberation Serif',serif" font-size="12.40" text-anchor="middle" fill="#111" stroke="#111" stroke-width="0.22" style="font-weight:bold">Nhãn</text>
<text transform="translate(1123.38,396.30) scale(0.7350,1)" font-family="'Liberation Serif',serif" font-size="12.40" text-anchor="middle" fill="#111" stroke="#111" stroke-width="0.22" style="font-weight:bold">hiệu</text>
<text transform="translate(1173.50,382.00) scale(0.7350,1)" font-family="'Liberation Serif',serif" font-size="12.40" text-anchor="middle" fill="#111" stroke="#111" stroke-width="0.22" style="font-weight:bold">Nước sản</text>
<text transform="translate(1173.50,396.30) scale(0.7350,1)" font-family="'Liberation Serif',serif" font-size="12.40" text-anchor="middle" fill="#111" stroke="#111" stroke-width="0.22" style="font-weight:bold">xuất</text>
<text transform="translate(1215.62,374.50) scale(0.7350,1)" font-family="'Liberation Serif',serif" font-size="12.40" text-anchor="middle" fill="#111" stroke="#111" stroke-width="0.22" style="font-weight:bold">Năm</text>
<text transform="translate(1215.62,388.75) scale(0.7350,1)" font-family="'Liberation Serif',serif" font-size="12.40" text-anchor="middle" fill="#111" stroke="#111" stroke-width="0.22" style="font-weight:bold">sản</text>
<text transform="translate(1215.62,403.00) scale(0.7350,1)" font-family="'Liberation Serif',serif" font-size="12.40" text-anchor="middle" fill="#111" stroke="#111" stroke-width="0.22" style="font-weight:bold">xuất</text>
<text transform="translate(1258.88,382.60) scale(0.7350,1)" font-family="'Liberation Serif',serif" font-size="12.40" text-anchor="middle" fill="#111" stroke="#111" stroke-width="0.22" style="font-weight:bold">Giá mua/thuê</text>
<text transform="translate(1258.88,398.50) scale(0.7350,1)" font-family="'Liberation Serif',serif" font-size="12.40" text-anchor="middle" fill="#111" stroke="#111" stroke-width="0.22" style="">(Nghìn đồng)</text>
<text transform="translate(1322.62,382.00) scale(0.7350,1)" font-family="'Liberation Serif',serif" font-size="12.40" text-anchor="middle" fill="#111" stroke="#111" stroke-width="0.22" style="font-weight:bold">Hình thức mua</text>
<text transform="translate(1322.62,396.30) scale(0.7350,1)" font-family="'Liberation Serif',serif" font-size="12.40" text-anchor="middle" fill="#111" stroke="#111" stroke-width="0.22" style="font-weight:bold">sắm/thuê</text>
<text transform="translate(1397.25,375.00) scale(0.7350,1)" font-family="'Liberation Serif',serif" font-size="12.40" text-anchor="middle" fill="#111" stroke="#111" stroke-width="0.22" style="font-weight:bold">Nhà cung cấp</text>
<text transform="translate(1397.25,391.30) scale(0.7350,1)" font-family="'Liberation Serif',serif" font-size="12.40" text-anchor="middle" fill="#111" stroke="#111" stroke-width="0.22" style="">(người bán)</text>
<text transform="translate(1468.75,338.00) scale(0.7350,1)" font-family="'Liberation Serif',serif" font-size="12.40" text-anchor="middle" fill="#111" stroke="#111" stroke-width="0.22" style="font-weight:bold">Giá trị các</text>
<text transform="translate(1468.75,352.10) scale(0.7350,1)" font-family="'Liberation Serif',serif" font-size="12.40" text-anchor="middle" fill="#111" stroke="#111" stroke-width="0.22" style="font-weight:bold">khoản hoa</text>
<text transform="translate(1468.75,366.30) scale(0.7350,1)" font-family="'Liberation Serif',serif" font-size="12.40" text-anchor="middle" fill="#111" stroke="#111" stroke-width="0.22" style="font-weight:bold">hồng, chiết</text>
<text transform="translate(1468.75,380.40) scale(0.7350,1)" font-family="'Liberation Serif',serif" font-size="12.40" text-anchor="middle" fill="#111" stroke="#111" stroke-width="0.22" style="font-weight:bold">khấu, khuyến</text>
<text transform="translate(1468.75,394.60) scale(0.7350,1)" font-family="'Liberation Serif',serif" font-size="12.40" text-anchor="middle" fill="#111" stroke="#111" stroke-width="0.22" style="font-weight:bold">mãi thu được</text>
<text transform="translate(1468.75,408.80) scale(0.7350,1)" font-family="'Liberation Serif',serif" font-size="12.40" text-anchor="middle" fill="#111" stroke="#111" stroke-width="0.22" style="font-weight:bold">khi thực hiện</text>
<text transform="translate(1468.75,423.00) scale(0.7350,1)" font-family="'Liberation Serif',serif" font-size="12.40" text-anchor="middle" fill="#111" stroke="#111" stroke-width="0.22" style="font-weight:bold">mua sắm</text>
<text transform="translate(1468.75,439.20) scale(0.7350,1)" font-family="'Liberation Serif',serif" font-size="12.40" text-anchor="middle" fill="#111" stroke="#111" stroke-width="0.22" style="">(nếu có)</text>
<text transform="translate(1556.90,342.50) scale(0.7350,1)" font-family="'Liberation Serif',serif" font-size="12.40" text-anchor="middle" fill="#111" stroke="#111" stroke-width="0.22" style="font-weight:bold">Việc sử dụng các khoản</text>
<text transform="translate(1556.90,356.80) scale(0.7350,1)" font-family="'Liberation Serif',serif" font-size="12.40" text-anchor="middle" fill="#111" stroke="#111" stroke-width="0.22" style="font-weight:bold">hoa hồng, chiết khấu,</text>
<text transform="translate(1556.90,371.00) scale(0.7350,1)" font-family="'Liberation Serif',serif" font-size="12.40" text-anchor="middle" fill="#111" stroke="#111" stroke-width="0.22" style="font-weight:bold">khuyến mãi</text>
<text transform="translate(1556.90,387.50) scale(0.7350,1)" font-family="'Liberation Serif',serif" font-size="12.40" text-anchor="middle" fill="#111" stroke="#111" stroke-width="0.22" style="">(nếu có)</text>
<text transform="translate(1528.25,415.75) scale(0.7350,1)" font-family="'Liberation Serif',serif" font-size="12.40" text-anchor="middle" fill="#111" stroke="#111" stroke-width="0.22" style="font-weight:bold">Nộp NSNN</text>
<text transform="translate(1528.25,432.50) scale(0.7350,1)" font-family="'Liberation Serif',serif" font-size="12.40" text-anchor="middle" fill="#111" stroke="#111" stroke-width="0.22" style="">(Nghìn đồng)</text>
<text transform="translate(1585.38,409.00) scale(0.7350,1)" font-family="'Liberation Serif',serif" font-size="12.40" text-anchor="middle" fill="#111" stroke="#111" stroke-width="0.22" style="font-weight:bold">Được để lại</text>
<text transform="translate(1585.38,422.80) scale(0.7350,1)" font-family="'Liberation Serif',serif" font-size="12.40" text-anchor="middle" fill="#111" stroke="#111" stroke-width="0.22" style="font-weight:bold">đơn vị</text>
<text transform="translate(1585.38,439.20) scale(0.7350,1)" font-family="'Liberation Serif',serif" font-size="12.40" text-anchor="middle" fill="#111" stroke="#111" stroke-width="0.22" style="">(Nghìn đồng)</text>
<text transform="translate(1630.25,382.00) scale(0.7350,1)" font-family="'Liberation Serif',serif" font-size="12.40" text-anchor="middle" fill="#111" stroke="#111" stroke-width="0.22" style="font-weight:bold">Ghi</text>
<text transform="translate(1630.25,396.30) scale(0.7350,1)" font-family="'Liberation Serif',serif" font-size="12.40" text-anchor="middle" fill="#111" stroke="#111" stroke-width="0.22" style="font-weight:bold">chú</text>
<text transform="translate(894.25,460.20) scale(0.7350,1) skewX(-7)" font-family="'Liberation Serif',serif" font-size="11.80" text-anchor="middle" fill="#111" stroke="#111" stroke-width="0.22" style="font-style:italic">1</text>
<text transform="translate(969.00,460.20) scale(0.7350,1) skewX(-7)" font-family="'Liberation Serif',serif" font-size="11.80" text-anchor="middle" fill="#111" stroke="#111" stroke-width="0.22" style="font-style:italic">2</text>
<text transform="translate(1050.12,460.20) scale(0.7350,1) skewX(-7)" font-family="'Liberation Serif',serif" font-size="11.80" text-anchor="middle" fill="#111" stroke="#111" stroke-width="0.22" style="font-style:italic">3</text>
<text transform="translate(1085.38,460.20) scale(0.7350,1) skewX(-7)" font-family="'Liberation Serif',serif" font-size="11.80" text-anchor="middle" fill="#111" stroke="#111" stroke-width="0.22" style="font-style:italic">4</text>
<text transform="translate(1123.38,460.20) scale(0.7350,1) skewX(-7)" font-family="'Liberation Serif',serif" font-size="11.80" text-anchor="middle" fill="#111" stroke="#111" stroke-width="0.22" style="font-style:italic">5</text>
<text transform="translate(1173.50,460.20) scale(0.7350,1) skewX(-7)" font-family="'Liberation Serif',serif" font-size="11.80" text-anchor="middle" fill="#111" stroke="#111" stroke-width="0.22" style="font-style:italic">6</text>
<text transform="translate(1215.62,460.20) scale(0.7350,1) skewX(-7)" font-family="'Liberation Serif',serif" font-size="11.80" text-anchor="middle" fill="#111" stroke="#111" stroke-width="0.22" style="font-style:italic">7</text>
<text transform="translate(1258.88,460.20) scale(0.7350,1) skewX(-7)" font-family="'Liberation Serif',serif" font-size="11.80" text-anchor="middle" fill="#111" stroke="#111" stroke-width="0.22" style="font-style:italic">8</text>
<text transform="translate(1322.62,460.20) scale(0.7350,1) skewX(-7)" font-family="'Liberation Serif',serif" font-size="11.80" text-anchor="middle" fill="#111" stroke="#111" stroke-width="0.22" style="font-style:italic">9</text>
<text transform="translate(1397.25,460.20) scale(0.7350,1) skewX(-7)" font-family="'Liberation Serif',serif" font-size="11.80" text-anchor="middle" fill="#111" stroke="#111" stroke-width="0.22" style="font-style:italic">10</text>
<text transform="translate(1468.75,460.20) scale(0.7350,1) skewX(-7)" font-family="'Liberation Serif',serif" font-size="11.80" text-anchor="middle" fill="#111" stroke="#111" stroke-width="0.22" style="font-style:italic">11</text>
<text transform="translate(1528.25,460.20) scale(0.7350,1) skewX(-7)" font-family="'Liberation Serif',serif" font-size="11.80" text-anchor="middle" fill="#111" stroke="#111" stroke-width="0.22" style="font-style:italic">12</text>
<text transform="translate(1585.38,460.20) scale(0.7350,1) skewX(-7)" font-family="'Liberation Serif',serif" font-size="11.80" text-anchor="middle" fill="#111" stroke="#111" stroke-width="0.22" style="font-style:italic">13</text>
<text transform="translate(1630.25,460.20) scale(0.7350,1) skewX(-7)" font-family="'Liberation Serif',serif" font-size="11.80" text-anchor="middle" fill="#111" stroke="#111" stroke-width="0.22" style="font-style:italic">14</text>
<text transform="translate(894.25,488.75) scale(0.7350,1)" font-family="'Liberation Serif',serif" font-size="13.50" text-anchor="middle" fill="#111" stroke="#111" stroke-width="0.22" style="font-weight:bold">I</text>
<text transform="translate(909.50,488.75) scale(0.7350,1)" font-family="'Liberation Serif',serif" font-size="13.50" text-anchor="start" fill="#111" stroke="#111" stroke-width="0.22" style="font-weight:bold">Đầu tư xây dựng, mua sắm</text>
<text transform="translate(1285.60,488.75) scale(0.6050,1)" font-family="'Liberation Sans',sans-serif" font-size="12.40" text-anchor="end" fill="#111" stroke="#111" stroke-width="0.22" style="font-weight:bold">5.150.000,0</text>
<text transform="translate(894.25,516.50) scale(0.7350,1)" font-family="'Liberation Serif',serif" font-size="13.50" text-anchor="middle" fill="#111" stroke="#111" stroke-width="0.22" style="font-weight:bold">1</text>
<text transform="translate(909.50,516.50) scale(0.7350,1)" font-family="'Liberation Serif',serif" font-size="13.50" text-anchor="start" fill="#111" stroke="#111" stroke-width="0.22" style="font-weight:bold">Đất khuôn viên</text>
<text transform="translate(1285.60,516.50) scale(0.6050,1)" font-family="'Liberation Sans',sans-serif" font-size="12.40" text-anchor="end" fill="#111" stroke="#111" stroke-width="0.22" style="font-weight:bold">3.000.000,0</text>
<text transform="translate(909.50,538.75) scale(0.7350,1)" font-family="'Liberation Serif',serif" font-size="13.50" text-anchor="start" fill="#111" stroke="#111" stroke-width="0.22" style="">Đất trụ sở 2</text>
<text transform="translate(1098.30,538.75) scale(0.6050,1)" font-family="'Liberation Sans',sans-serif" font-size="12.40" text-anchor="end" fill="#222" stroke="#222" stroke-width="0.22" style="">1</text>
<text transform="translate(1285.60,538.75) scale(0.6050,1)" font-family="'Liberation Sans',sans-serif" font-size="12.40" text-anchor="end" fill="#222" stroke="#222" stroke-width="0.22" style="">2.000.000,0</text>
<text transform="translate(909.50,560.50) scale(0.7350,1)" font-family="'Liberation Serif',serif" font-size="13.50" text-anchor="start" fill="#111" stroke="#111" stroke-width="0.22" style="">Đất văn phòng 0AA</text>
<text transform="translate(1098.30,560.50) scale(0.6050,1)" font-family="'Liberation Sans',sans-serif" font-size="12.40" text-anchor="end" fill="#222" stroke="#222" stroke-width="0.22" style="">1</text>
<text transform="translate(1285.60,560.50) scale(0.6050,1)" font-family="'Liberation Sans',sans-serif" font-size="12.40" text-anchor="end" fill="#222" stroke="#222" stroke-width="0.22" style="">1.000.000,0</text>
<text transform="translate(894.25,582.50) scale(0.7350,1)" font-family="'Liberation Serif',serif" font-size="13.50" text-anchor="middle" fill="#111" stroke="#111" stroke-width="0.22" style="font-weight:bold">2</text>
<text transform="translate(909.50,582.50) scale(0.7350,1)" font-family="'Liberation Serif',serif" font-size="13.50" text-anchor="start" fill="#111" stroke="#111" stroke-width="0.22" style="font-weight:bold">Nhà</text>
<text transform="translate(1285.60,582.50) scale(0.6050,1)" font-family="'Liberation Sans',sans-serif" font-size="12.40" text-anchor="end" fill="#111" stroke="#111" stroke-width="0.22" style="font-weight:bold">1.000.000,0</text>
<text transform="translate(909.50,604.50) scale(0.7350,1)" font-family="'Liberation Serif',serif" font-size="13.50" text-anchor="start" fill="#111" stroke="#111" stroke-width="0.22" style="">Nhà văn phòng</text>
<text transform="translate(1285.60,604.50) scale(0.6050,1)" font-family="'Liberation Sans',sans-serif" font-size="12.40" text-anchor="end" fill="#222" stroke="#222" stroke-width="0.22" style="">300.000,0</text>
<text transform="translate(909.50,626.30) scale(0.7350,1)" font-family="'Liberation Serif',serif" font-size="13.50" text-anchor="start" fill="#111" stroke="#111" stroke-width="0.22" style="">Nhà vệ sinh</text>
<text transform="translate(1098.30,626.30) scale(0.6050,1)" font-family="'Liberation Sans',sans-serif" font-size="12.40" text-anchor="end" fill="#222" stroke="#222" stroke-width="0.22" style="">1</text>
<text transform="translate(1285.60,626.30) scale(0.6050,1)" font-family="'Liberation Sans',sans-serif" font-size="12.40" text-anchor="end" fill="#222" stroke="#222" stroke-width="0.22" style="">100.000,0</text>
<text transform="translate(909.50,648.70) scale(0.7350,1)" font-family="'Liberation Serif',serif" font-size="13.50" text-anchor="start" fill="#111" stroke="#111" stroke-width="0.22" style="">Nhà vệ sinh 2</text>
<text transform="translate(1098.30,648.70) scale(0.6050,1)" font-family="'Liberation Sans',sans-serif" font-size="12.40" text-anchor="end" fill="#222" stroke="#222" stroke-width="0.22" style="">1</text>
<text transform="translate(1285.60,648.70) scale(0.6050,1)" font-family="'Liberation Sans',sans-serif" font-size="12.40" text-anchor="end" fill="#222" stroke="#222" stroke-width="0.22" style="">300.000,0</text>
<text transform="translate(909.50,670.70) scale(0.7350,1)" font-family="'Liberation Serif',serif" font-size="13.50" text-anchor="start" fill="#111" stroke="#111" stroke-width="0.22" style="">Nhà vệ sinh 3</text>
<text transform="translate(1098.30,670.70) scale(0.6050,1)" font-family="'Liberation Sans',sans-serif" font-size="12.40" text-anchor="end" fill="#222" stroke="#222" stroke-width="0.22" style="">1</text>
<text transform="translate(1285.60,670.70) scale(0.6050,1)" font-family="'Liberation Sans',sans-serif" font-size="12.40" text-anchor="end" fill="#222" stroke="#222" stroke-width="0.22" style="">300.000,0</text>
<text transform="translate(894.25,692.50) scale(0.7350,1)" font-family="'Liberation Serif',serif" font-size="13.50" text-anchor="middle" fill="#111" stroke="#111" stroke-width="0.22" style="font-weight:bold">3</text>
<text transform="translate(909.50,692.50) scale(0.7350,1)" font-family="'Liberation Serif',serif" font-size="13.50" text-anchor="start" fill="#111" stroke="#111" stroke-width="0.22" style="font-weight:bold">Xe ô tô</text>
<text transform="translate(1285.60,692.50) scale(0.6050,1)" font-family="'Liberation Sans',sans-serif" font-size="12.40" text-anchor="end" fill="#111" stroke="#111" stroke-width="0.22" style="font-weight:bold">930.000,0</text>
<text transform="translate(909.50,720.60) scale(0.7350,1)" font-family="'Liberation Serif',serif" font-size="13.50" text-anchor="start" fill="#111" stroke="#111" stroke-width="0.22" style="">Ô tô camry 01</text>
<text transform="translate(1098.30,720.60) scale(0.6050,1)" font-family="'Liberation Sans',sans-serif" font-size="12.40" text-anchor="end" fill="#222" stroke="#222" stroke-width="0.22" style="">1</text>
<text transform="translate(1104.50,720.60) scale(0.7350,1)" font-family="'Liberation Serif',serif" font-size="13.50" text-anchor="start" fill="#111" stroke="#111" stroke-width="0.22" style="">ASI Mới</text>
<text transform="translate(1285.60,720.60) scale(0.6050,1)" font-family="'Liberation Sans',sans-serif" font-size="12.40" text-anchor="end" fill="#222" stroke="#222" stroke-width="0.22" style="">230.000,0</text>
<text transform="translate(909.50,748.75) scale(0.7350,1)" font-family="'Liberation Serif',serif" font-size="13.50" text-anchor="start" fill="#111" stroke="#111" stroke-width="0.22" style="">Ô tô Lada 2018</text>
<text transform="translate(1098.30,748.75) scale(0.6050,1)" font-family="'Liberation Sans',sans-serif" font-size="12.40" text-anchor="end" fill="#222" stroke="#222" stroke-width="0.22" style="">1</text>
<text transform="translate(1104.50,748.75) scale(0.7350,1)" font-family="'Liberation Serif',serif" font-size="13.50" text-anchor="start" fill="#111" stroke="#111" stroke-width="0.22" style="">ASIA</text>
<text transform="translate(1285.60,748.75) scale(0.6050,1)" font-family="'Liberation Sans',sans-serif" font-size="12.40" text-anchor="end" fill="#222" stroke="#222" stroke-width="0.22" style="">100.000,0</text>
<text transform="translate(909.50,771.20) scale(0.7350,1)" font-family="'Liberation Serif',serif" font-size="13.50" text-anchor="start" fill="#111" stroke="#111" stroke-width="0.22" style="">Ô tô Lada 2018.1</text>
<text transform="translate(1098.30,771.20) scale(0.6050,1)" font-family="'Liberation Sans',sans-serif" font-size="12.40" text-anchor="end" fill="#222" stroke="#222" stroke-width="0.22" style="">1</text>
<text transform="translate(1104.50,771.20) scale(0.7350,1)" font-family="'Liberation Serif',serif" font-size="13.50" text-anchor="start" fill="#111" stroke="#111" stroke-width="0.22" style="">ASIA</text>
<text transform="translate(1285.60,771.20) scale(0.6050,1)" font-family="'Liberation Sans',sans-serif" font-size="12.40" text-anchor="end" fill="#222" stroke="#222" stroke-width="0.22" style="">100.000,0</text>
<text transform="translate(909.50,793.00) scale(0.7350,1)" font-family="'Liberation Serif',serif" font-size="13.50" text-anchor="start" fill="#111" stroke="#111" stroke-width="0.22" style="">Ô tô Lada 2018.1</text>
<text transform="translate(1098.30,793.00) scale(0.6050,1)" font-family="'Liberation Sans',sans-serif" font-size="12.40" text-anchor="end" fill="#222" stroke="#222" stroke-width="0.22" style="">1</text>
<text transform="translate(1104.50,793.00) scale(0.7350,1)" font-family="'Liberation Serif',serif" font-size="13.50" text-anchor="start" fill="#111" stroke="#111" stroke-width="0.22" style="">ASIA</text>
<text transform="translate(1285.60,793.00) scale(0.6050,1)" font-family="'Liberation Sans',sans-serif" font-size="12.40" text-anchor="end" fill="#222" stroke="#222" stroke-width="0.22" style="">100.000,0</text>
<text transform="translate(909.50,815.00) scale(0.7350,1)" font-family="'Liberation Serif',serif" font-size="13.50" text-anchor="start" fill="#111" stroke="#111" stroke-width="0.22" style="">Xe o to ANFA</text>
<text transform="translate(1034.00,815.00) scale(0.7350,1)" font-family="'Liberation Serif',serif" font-size="13.50" text-anchor="start" fill="#111" stroke="#111" stroke-width="0.22" style="">Chiec</text>
<text transform="translate(1098.30,815.00) scale(0.6050,1)" font-family="'Liberation Sans',sans-serif" font-size="12.40" text-anchor="end" fill="#222" stroke="#222" stroke-width="0.22" style="">1</text>
<text transform="translate(1104.50,815.00) scale(0.7350,1)" font-family="'Liberation Serif',serif" font-size="13.50" text-anchor="start" fill="#111" stroke="#111" stroke-width="0.22" style="">ANFA</text>
<text transform="translate(1285.60,815.00) scale(0.6050,1)" font-family="'Liberation Sans',sans-serif" font-size="12.40" text-anchor="end" fill="#222" stroke="#222" stroke-width="0.22" style="">200.000,0</text>
<text transform="translate(909.50,837.50) scale(0.7350,1)" font-family="'Liberation Serif',serif" font-size="13.50" text-anchor="start" fill="#111" stroke="#111" stroke-width="0.22" style="">Xe o to lili</text>
<text transform="translate(1034.00,837.50) scale(0.7350,1)" font-family="'Liberation Serif',serif" font-size="13.50" text-anchor="start" fill="#111" stroke="#111" stroke-width="0.22" style="">Chiec</text>
<text transform="translate(1098.30,837.50) scale(0.6050,1)" font-family="'Liberation Sans',sans-serif" font-size="12.40" text-anchor="end" fill="#222" stroke="#222" stroke-width="0.22" style="">1</text>
<text transform="translate(1104.50,837.50) scale(0.7350,1)" font-family="'Liberation Serif',serif" font-size="13.50" text-anchor="start" fill="#111" stroke="#111" stroke-width="0.22" style="">LILI</text>
<text transform="translate(1285.60,837.50) scale(0.6050,1)" font-family="'Liberation Sans',sans-serif" font-size="12.40" text-anchor="end" fill="#222" stroke="#222" stroke-width="0.22" style="">200.000,0</text>
<g transform="translate(1098.2,610.6) rotate(-44.2) scale(0.86,1)" font-family="'Liberation Serif',serif" font-size="53" font-weight="bold" fill="#4060ee" stroke="#4060ee" stroke-width="0.5" word-spacing="7"><text x="0.0" y="0">BÁO CÁO MẪU</text><text x="1.2" y="0">BÁO CÁO MẪU</text><text x="2.4" y="0">BÁO CÁO MẪU</text><text x="3.6" y="0">BÁO CÁO MẪU</text></g>
</g>
</svg>
</div>
</div>
<div class="abs" style="left:1683px;top:303px;width:12px;height:16px;background:#4461ea;border-radius:2px 0 0 0"></div>
<svg class="abs" style="left:1686.6px;top:303.8px" width="9" height="11" viewBox="0 0 9 11"><path d="M2.3 1.3 L6.8 5.5 L2.3 9.7" fill="none" stroke="#fff" stroke-width="1.2"/></svg>
<div class="abs" style="left:1659px;top:320.3px;width:40px;height:83.5px;background:#4461ea;border-radius:8px 0 0 8px"></div>
<svg class="abs" style="left:1668px;top:328px" width="24" height="25.5" viewBox="0 0 24 25.5" preserveAspectRatio="none"><path d="M12 2.2 C6.4 2.2 2.2 6.2 2.2 11.2 C2.2 13.7 3.2 15.8 4.9 17.5 C4.6 19 3.8 20.3 2.5 21.4 C5.5 21.5 7.6 20.6 9 19.8 C9.9 20.1 11 20.2 12 20.2 C17.6 20.2 21.8 16.2 21.8 11.2 C21.8 6.2 17.6 2.2 12 2.2 Z" fill="#fff" transform="scale(1,1.06)"/><path d="M8 9.2 V14.4 M12 6.2 V17.6 M16 9.2 V14.4" stroke="#4461ea" stroke-width="1.5" stroke-linecap="butt"/></svg>
<svg class="abs" style="left:1665.3px;top:368px" width="26" height="26" viewBox="0 0 26 26" overflow="visible"><g fill="#fff"><path d="M13.30 0.60 L14.16 2.91 L16.63 3.02 L14.70 4.55 L15.36 6.93 L13.30 5.57 L11.24 6.93 L11.90 4.55 L9.97 3.02 L12.44 2.91 Z"/><path d="M4.40 4.50 L5.17 6.55 L7.35 6.64 L5.64 8.00 L6.22 10.11 L4.40 8.90 L2.58 10.11 L3.16 8.00 L1.45 6.64 L3.63 6.55 Z"/><path d="M22.20 4.50 L22.97 6.55 L25.15 6.64 L23.44 8.00 L24.02 10.11 L22.20 8.90 L20.38 10.11 L20.96 8.00 L19.25 6.64 L21.43 6.55 Z"/><rect x="5.4" y="14.4" width="3.4" height="8.9" rx="0.6"/><path d="M10 23.3 V15 C11.4 13.6 12.3 11.8 12.6 9.6 C12.7 9 13.2 8.8 13.7 8.9 C15 9.2 15.5 10.4 15.3 11.8 L14.9 13.9 H19.2 C20.3 13.9 21 14.8 20.8 15.8 L19.7 21.7 C19.5 22.7 18.8 23.3 17.8 23.3 Z"/></g></svg>
</div></body></html>
